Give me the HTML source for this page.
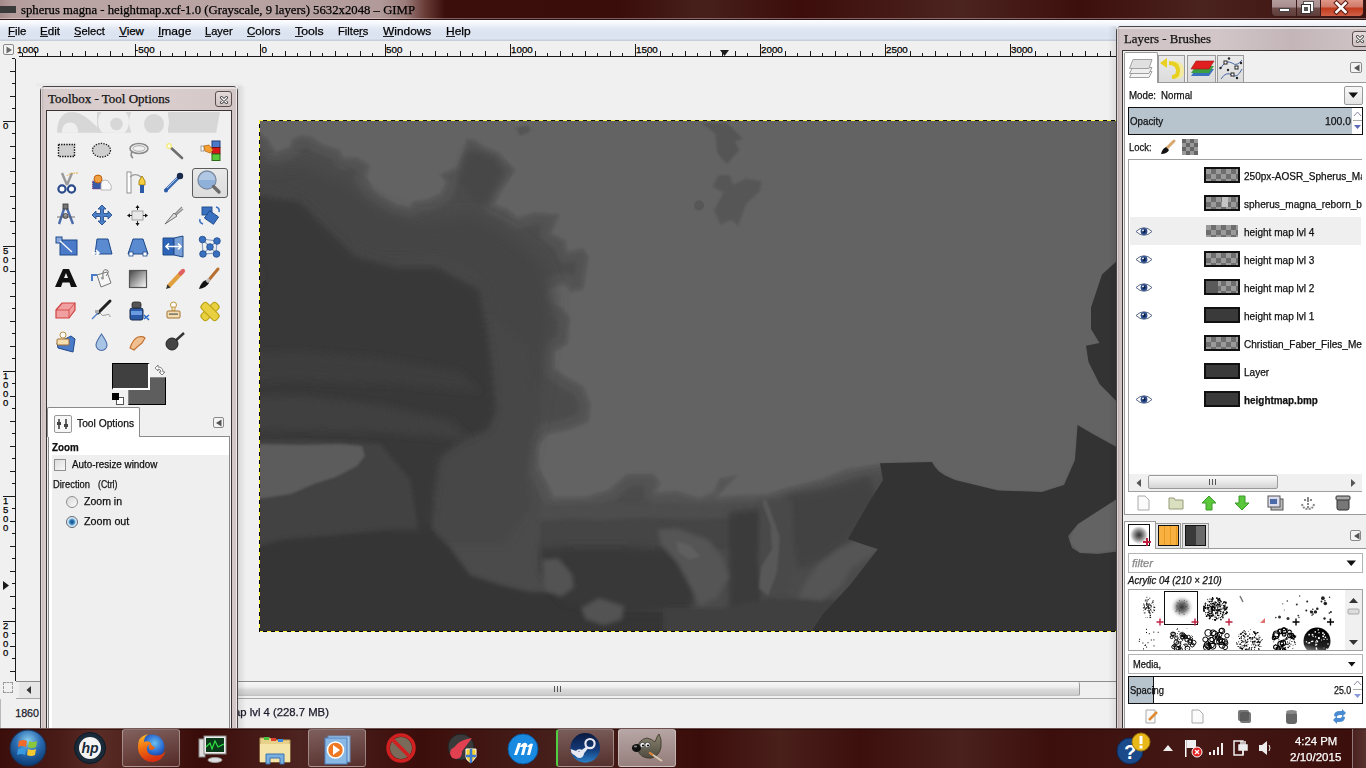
<!DOCTYPE html><html><head><meta charset="utf-8"><style>*{margin:0;padding:0;box-sizing:border-box}
html,body{width:1366px;height:768px;overflow:hidden;background:#f0f0f0;font-family:"Liberation Sans",sans-serif;position:relative}
.a{position:absolute}
.t{position:absolute;white-space:nowrap;line-height:1;-webkit-text-stroke:0.25px currentColor}
svg{position:absolute;overflow:visible}
</style></head><body><div class="a" style="left:0px;top:0px;width:1366px;height:19px;background:linear-gradient(90deg,#a48a8a 0px,#b49c9c 12px,#baa4a4 60px,#b8a2a2 250px,#b29a9a 380px,#9c7e7c 405px,#6a3c38 425px,#3c0e0b 445px,#3a0d0a 620px,#47201c 700px,#3c0d0a 800px,#4c241f 960px,#3d0f0c 1080px,#4a221e 1200px,#3c100d 1366px)"></div>
<div class="a" style="left:0px;top:18px;width:1366px;height:1px;background:rgba(255,240,240,0.35)"></div>
<div class="a" style="left:0px;top:19px;width:1366px;height:1px;background:#2a1212"></div>
<div class="a" style="left:0px;top:6px;width:16px;height:7px;background:#3a3a3a"></div>
<div class="t" style="left:21px;top:3.00px;font-size:13px;font-family:'Liberation Serif',serif;color:#000;transform:scaleX(0.9797);transform-origin:0 0;">spherus magna - heightmap.xcf-1.0 (Grayscale, 9 layers) 5632x2048 – GIMP</div>
<div class="a" style="left:1271px;top:0px;width:93px;height:17px;border:1px solid #3a1a18;border-top:none;border-radius:0 0 5px 5px;background:transparent"></div>
<div class="a" style="left:1272px;top:0px;width:25px;height:16px;background:linear-gradient(#b49c9c 0,#a88e8e 7px,#6e4c4a 8px,#5e3c3a 16px);border-right:1px solid #3a1a18;border-radius:0 0 0 4px"></div>
<div class="a" style="left:1279px;top:8px;width:11px;height:4px;background:#fff;border:1px solid #444"></div>
<div class="a" style="left:1297px;top:0px;width:24px;height:16px;background:linear-gradient(#b49c9c 0,#a88e8e 7px,#6e4c4a 8px,#5e3c3a 16px);border-right:1px solid #3a1a18"></div>
<div class="a" style="left:1304px;top:2px;width:9px;height:9px;border:2px solid #fff;outline:1px solid #555"></div>
<div class="a" style="left:1302px;top:5px;width:8px;height:8px;border:2px solid #fff;background:#555;outline:1px solid #333"></div>
<div class="a" style="left:1321px;top:0px;width:42px;height:16px;background:linear-gradient(#e09888 0,#d07868 7px,#c23a1c 8px,#d06048 16px);border-radius:0 0 4px 0"></div>
<svg style="left:1334px;top:1px" width="14" height="13"><path d="M2.5 2 L11.5 11 M11.5 2 L2.5 11" stroke="#5a1a10" stroke-width="4.6" stroke-linecap="square"/><path d="M2.5 2 L11.5 11 M11.5 2 L2.5 11" stroke="#fff" stroke-width="2.6" stroke-linecap="square"/></svg>
<div class="a" style="left:0px;top:20px;width:1366px;height:21px;background:linear-gradient(#fcfdff 0,#f6f8fc 3px,#e3e9f4 8px,#dbe3f1 14px,#dde5f2 19px,#c6ced9 20px)"></div>
<div class="t" style="left:8px;top:26.00px;font-size:11.5px;font-family:'Liberation Sans',sans-serif;color:#000;transform:scaleX(0.9930);transform-origin:0 0;">File</div>
<div class="t" style="left:40px;top:26.00px;font-size:11.5px;font-family:'Liberation Sans',sans-serif;color:#000;transform:scaleX(1.0093);transform-origin:0 0;">Edit</div>
<div class="t" style="left:74.2px;top:26.00px;font-size:11.5px;font-family:'Liberation Sans',sans-serif;color:#000;transform:scaleX(0.9637);transform-origin:0 0;">Select</div>
<div class="t" style="left:119.2px;top:26.00px;font-size:11.5px;font-family:'Liberation Sans',sans-serif;color:#000;">View</div>
<div class="t" style="left:157.8px;top:26.00px;font-size:11.5px;font-family:'Liberation Sans',sans-serif;color:#000;transform:scaleX(1.0451);transform-origin:0 0;">Image</div>
<div class="t" style="left:205.3px;top:26.00px;font-size:11.5px;font-family:'Liberation Sans',sans-serif;color:#000;transform:scaleX(0.9595);transform-origin:0 0;">Layer</div>
<div class="t" style="left:247.4px;top:26.00px;font-size:11.5px;font-family:'Liberation Sans',sans-serif;color:#000;transform:scaleX(1.0081);transform-origin:0 0;">Colors</div>
<div class="t" style="left:295px;top:26.00px;font-size:11.5px;font-family:'Liberation Sans',sans-serif;color:#000;transform:scaleX(1.0691);transform-origin:0 0;">Tools</div>
<div class="t" style="left:338.3px;top:26.00px;font-size:11.5px;font-family:'Liberation Sans',sans-serif;color:#000;transform:scaleX(0.9711);transform-origin:0 0;">Filters</div>
<div class="t" style="left:383.4px;top:26.00px;font-size:11.5px;font-family:'Liberation Sans',sans-serif;color:#000;transform:scaleX(1.0354);transform-origin:0 0;">Windows</div>
<div class="t" style="left:446px;top:26.00px;font-size:11.5px;font-family:'Liberation Sans',sans-serif;color:#000;transform:scaleX(1.0444);transform-origin:0 0;">Help</div>
<div class="a" style="left:8px;top:36px;width:7px;height:1px;background:#222"></div>
<div class="a" style="left:40px;top:36px;width:8px;height:1px;background:#222"></div>
<div class="a" style="left:74px;top:36px;width:7px;height:1px;background:#222"></div>
<div class="a" style="left:119px;top:36px;width:8px;height:1px;background:#222"></div>
<div class="a" style="left:158px;top:36px;width:5px;height:1px;background:#222"></div>
<div class="a" style="left:205px;top:36px;width:6px;height:1px;background:#222"></div>
<div class="a" style="left:247px;top:36px;width:8px;height:1px;background:#222"></div>
<div class="a" style="left:295px;top:36px;width:8px;height:1px;background:#222"></div>
<div class="a" style="left:359px;top:36px;width:5px;height:1px;background:#222"></div>
<div class="a" style="left:383px;top:36px;width:11px;height:1px;background:#222"></div>
<div class="a" style="left:446px;top:36px;width:9px;height:1px;background:#222"></div>
<div class="a" style="left:0px;top:41px;width:1366px;height:16px;background:#f0f0f0"></div>
<div class="a" style="left:3px;top:44px;width:11px;height:11px;border:1px solid #8a8a8a;border-radius:2px;background:#f4f4f4"></div>
<svg style="left:5px;top:46px" width="8" height="8"><path d="M1.5 0.5 L7 4 L1.5 7.5Z" fill="#6a6a6a"/></svg>
<svg style="left:0;top:0" width="1366" height="690"><rect x="19" y="56" width="1097" height="1" fill="#1a1a1a"/><rect x="15" y="59" width="1" height="622" fill="#1a1a1a"/><rect x="22" y="53" width="1" height="3" fill="#1a1a1a"/><rect x="35" y="51" width="1" height="5" fill="#1a1a1a"/><rect x="47" y="53" width="1" height="3" fill="#1a1a1a"/><rect x="60" y="51" width="1" height="5" fill="#1a1a1a"/><rect x="72" y="53" width="1" height="3" fill="#1a1a1a"/><rect x="85" y="51" width="1" height="5" fill="#1a1a1a"/><rect x="97" y="53" width="1" height="3" fill="#1a1a1a"/><rect x="110" y="51" width="1" height="5" fill="#1a1a1a"/><rect x="122" y="53" width="1" height="3" fill="#1a1a1a"/><rect x="135" y="44" width="1" height="12" fill="#1a1a1a"/><rect x="147" y="53" width="1" height="3" fill="#1a1a1a"/><rect x="160" y="51" width="1" height="5" fill="#1a1a1a"/><rect x="172" y="53" width="1" height="3" fill="#1a1a1a"/><rect x="185" y="51" width="1" height="5" fill="#1a1a1a"/><rect x="197" y="53" width="1" height="3" fill="#1a1a1a"/><rect x="210" y="51" width="1" height="5" fill="#1a1a1a"/><rect x="222" y="53" width="1" height="3" fill="#1a1a1a"/><rect x="235" y="51" width="1" height="5" fill="#1a1a1a"/><rect x="247" y="53" width="1" height="3" fill="#1a1a1a"/><rect x="260" y="44" width="1" height="12" fill="#1a1a1a"/><rect x="272" y="53" width="1" height="3" fill="#1a1a1a"/><rect x="285" y="51" width="1" height="5" fill="#1a1a1a"/><rect x="297" y="53" width="1" height="3" fill="#1a1a1a"/><rect x="310" y="51" width="1" height="5" fill="#1a1a1a"/><rect x="322" y="53" width="1" height="3" fill="#1a1a1a"/><rect x="335" y="51" width="1" height="5" fill="#1a1a1a"/><rect x="347" y="53" width="1" height="3" fill="#1a1a1a"/><rect x="360" y="51" width="1" height="5" fill="#1a1a1a"/><rect x="372" y="53" width="1" height="3" fill="#1a1a1a"/><rect x="385" y="44" width="1" height="12" fill="#1a1a1a"/><rect x="397" y="53" width="1" height="3" fill="#1a1a1a"/><rect x="410" y="51" width="1" height="5" fill="#1a1a1a"/><rect x="422" y="53" width="1" height="3" fill="#1a1a1a"/><rect x="435" y="51" width="1" height="5" fill="#1a1a1a"/><rect x="447" y="53" width="1" height="3" fill="#1a1a1a"/><rect x="460" y="51" width="1" height="5" fill="#1a1a1a"/><rect x="472" y="53" width="1" height="3" fill="#1a1a1a"/><rect x="485" y="51" width="1" height="5" fill="#1a1a1a"/><rect x="497" y="53" width="1" height="3" fill="#1a1a1a"/><rect x="510" y="44" width="1" height="12" fill="#1a1a1a"/><rect x="522" y="53" width="1" height="3" fill="#1a1a1a"/><rect x="535" y="51" width="1" height="5" fill="#1a1a1a"/><rect x="547" y="53" width="1" height="3" fill="#1a1a1a"/><rect x="560" y="51" width="1" height="5" fill="#1a1a1a"/><rect x="572" y="53" width="1" height="3" fill="#1a1a1a"/><rect x="585" y="51" width="1" height="5" fill="#1a1a1a"/><rect x="597" y="53" width="1" height="3" fill="#1a1a1a"/><rect x="610" y="51" width="1" height="5" fill="#1a1a1a"/><rect x="622" y="53" width="1" height="3" fill="#1a1a1a"/><rect x="635" y="44" width="1" height="12" fill="#1a1a1a"/><rect x="647" y="53" width="1" height="3" fill="#1a1a1a"/><rect x="660" y="51" width="1" height="5" fill="#1a1a1a"/><rect x="672" y="53" width="1" height="3" fill="#1a1a1a"/><rect x="685" y="51" width="1" height="5" fill="#1a1a1a"/><rect x="697" y="53" width="1" height="3" fill="#1a1a1a"/><rect x="710" y="51" width="1" height="5" fill="#1a1a1a"/><rect x="722" y="53" width="1" height="3" fill="#1a1a1a"/><rect x="735" y="51" width="1" height="5" fill="#1a1a1a"/><rect x="747" y="53" width="1" height="3" fill="#1a1a1a"/><rect x="760" y="44" width="1" height="12" fill="#1a1a1a"/><rect x="772" y="53" width="1" height="3" fill="#1a1a1a"/><rect x="785" y="51" width="1" height="5" fill="#1a1a1a"/><rect x="797" y="53" width="1" height="3" fill="#1a1a1a"/><rect x="810" y="51" width="1" height="5" fill="#1a1a1a"/><rect x="822" y="53" width="1" height="3" fill="#1a1a1a"/><rect x="835" y="51" width="1" height="5" fill="#1a1a1a"/><rect x="847" y="53" width="1" height="3" fill="#1a1a1a"/><rect x="860" y="51" width="1" height="5" fill="#1a1a1a"/><rect x="872" y="53" width="1" height="3" fill="#1a1a1a"/><rect x="885" y="44" width="1" height="12" fill="#1a1a1a"/><rect x="897" y="53" width="1" height="3" fill="#1a1a1a"/><rect x="910" y="51" width="1" height="5" fill="#1a1a1a"/><rect x="922" y="53" width="1" height="3" fill="#1a1a1a"/><rect x="935" y="51" width="1" height="5" fill="#1a1a1a"/><rect x="947" y="53" width="1" height="3" fill="#1a1a1a"/><rect x="960" y="51" width="1" height="5" fill="#1a1a1a"/><rect x="972" y="53" width="1" height="3" fill="#1a1a1a"/><rect x="985" y="51" width="1" height="5" fill="#1a1a1a"/><rect x="997" y="53" width="1" height="3" fill="#1a1a1a"/><rect x="1010" y="44" width="1" height="12" fill="#1a1a1a"/><rect x="1022" y="53" width="1" height="3" fill="#1a1a1a"/><rect x="1035" y="51" width="1" height="5" fill="#1a1a1a"/><rect x="1047" y="53" width="1" height="3" fill="#1a1a1a"/><rect x="1060" y="51" width="1" height="5" fill="#1a1a1a"/><rect x="1072" y="53" width="1" height="3" fill="#1a1a1a"/><rect x="1085" y="51" width="1" height="5" fill="#1a1a1a"/><rect x="1097" y="53" width="1" height="3" fill="#1a1a1a"/><rect x="1110" y="51" width="1" height="5" fill="#1a1a1a"/><rect x="12" y="58" width="3" height="1" fill="#1a1a1a"/><rect x="10" y="71" width="5" height="1" fill="#1a1a1a"/><rect x="12" y="83" width="3" height="1" fill="#1a1a1a"/><rect x="10" y="96" width="5" height="1" fill="#1a1a1a"/><rect x="12" y="108" width="3" height="1" fill="#1a1a1a"/><rect x="3" y="121" width="12" height="1" fill="#1a1a1a"/><rect x="12" y="133" width="3" height="1" fill="#1a1a1a"/><rect x="10" y="146" width="5" height="1" fill="#1a1a1a"/><rect x="12" y="158" width="3" height="1" fill="#1a1a1a"/><rect x="10" y="171" width="5" height="1" fill="#1a1a1a"/><rect x="12" y="183" width="3" height="1" fill="#1a1a1a"/><rect x="10" y="196" width="5" height="1" fill="#1a1a1a"/><rect x="12" y="208" width="3" height="1" fill="#1a1a1a"/><rect x="10" y="221" width="5" height="1" fill="#1a1a1a"/><rect x="12" y="233" width="3" height="1" fill="#1a1a1a"/><rect x="3" y="246" width="12" height="1" fill="#1a1a1a"/><rect x="12" y="258" width="3" height="1" fill="#1a1a1a"/><rect x="10" y="271" width="5" height="1" fill="#1a1a1a"/><rect x="12" y="283" width="3" height="1" fill="#1a1a1a"/><rect x="10" y="296" width="5" height="1" fill="#1a1a1a"/><rect x="12" y="308" width="3" height="1" fill="#1a1a1a"/><rect x="10" y="321" width="5" height="1" fill="#1a1a1a"/><rect x="12" y="333" width="3" height="1" fill="#1a1a1a"/><rect x="10" y="346" width="5" height="1" fill="#1a1a1a"/><rect x="12" y="358" width="3" height="1" fill="#1a1a1a"/><rect x="3" y="371" width="12" height="1" fill="#1a1a1a"/><rect x="12" y="383" width="3" height="1" fill="#1a1a1a"/><rect x="10" y="396" width="5" height="1" fill="#1a1a1a"/><rect x="12" y="408" width="3" height="1" fill="#1a1a1a"/><rect x="10" y="421" width="5" height="1" fill="#1a1a1a"/><rect x="12" y="433" width="3" height="1" fill="#1a1a1a"/><rect x="10" y="446" width="5" height="1" fill="#1a1a1a"/><rect x="12" y="458" width="3" height="1" fill="#1a1a1a"/><rect x="10" y="471" width="5" height="1" fill="#1a1a1a"/><rect x="12" y="483" width="3" height="1" fill="#1a1a1a"/><rect x="3" y="496" width="12" height="1" fill="#1a1a1a"/><rect x="12" y="508" width="3" height="1" fill="#1a1a1a"/><rect x="10" y="521" width="5" height="1" fill="#1a1a1a"/><rect x="12" y="533" width="3" height="1" fill="#1a1a1a"/><rect x="10" y="546" width="5" height="1" fill="#1a1a1a"/><rect x="12" y="558" width="3" height="1" fill="#1a1a1a"/><rect x="10" y="571" width="5" height="1" fill="#1a1a1a"/><rect x="12" y="583" width="3" height="1" fill="#1a1a1a"/><rect x="10" y="596" width="5" height="1" fill="#1a1a1a"/><rect x="12" y="608" width="3" height="1" fill="#1a1a1a"/><rect x="3" y="621" width="12" height="1" fill="#1a1a1a"/><rect x="12" y="633" width="3" height="1" fill="#1a1a1a"/><rect x="10" y="646" width="5" height="1" fill="#1a1a1a"/><rect x="12" y="658" width="3" height="1" fill="#1a1a1a"/><rect x="10" y="671" width="5" height="1" fill="#1a1a1a"/><path d="M720 50 L729 50 L724.5 56Z" fill="#1a1a1a"/><path d="M3 581 L3 590 L9 585.5Z" fill="#1a1a1a"/></svg>
<div class="t" style="left:17px;top:45.00px;font-size:9.8px;font-family:'Liberation Sans',sans-serif;color:#000;">1000</div>
<div class="t" style="left:135px;top:45.00px;font-size:9.8px;font-family:'Liberation Sans',sans-serif;color:#000;">-500</div>
<div class="t" style="left:261.5px;top:45.00px;font-size:9.8px;font-family:'Liberation Sans',sans-serif;color:#000;">0</div>
<div class="t" style="left:386px;top:45.00px;font-size:9.8px;font-family:'Liberation Sans',sans-serif;color:#000;">500</div>
<div class="t" style="left:511px;top:45.00px;font-size:9.8px;font-family:'Liberation Sans',sans-serif;color:#000;">1000</div>
<div class="t" style="left:636px;top:45.00px;font-size:9.8px;font-family:'Liberation Sans',sans-serif;color:#000;">1500</div>
<div class="t" style="left:761px;top:45.00px;font-size:9.8px;font-family:'Liberation Sans',sans-serif;color:#000;">2000</div>
<div class="t" style="left:886px;top:45.00px;font-size:9.8px;font-family:'Liberation Sans',sans-serif;color:#000;">2500</div>
<div class="t" style="left:1011px;top:45.00px;font-size:9.8px;font-family:'Liberation Sans',sans-serif;color:#000;">3000</div>
<div class="t" style="left:3px;top:121.00px;font-size:9.5px;font-family:'Liberation Sans',sans-serif;color:#000;">0</div>
<div class="t" style="left:3px;top:246.00px;font-size:9.5px;font-family:'Liberation Sans',sans-serif;color:#000;">5</div>
<div class="t" style="left:3px;top:255.00px;font-size:9.5px;font-family:'Liberation Sans',sans-serif;color:#000;">0</div>
<div class="t" style="left:3px;top:264.00px;font-size:9.5px;font-family:'Liberation Sans',sans-serif;color:#000;">0</div>
<div class="t" style="left:3px;top:371.00px;font-size:9.5px;font-family:'Liberation Sans',sans-serif;color:#000;">1</div>
<div class="t" style="left:3px;top:380.00px;font-size:9.5px;font-family:'Liberation Sans',sans-serif;color:#000;">0</div>
<div class="t" style="left:3px;top:389.00px;font-size:9.5px;font-family:'Liberation Sans',sans-serif;color:#000;">0</div>
<div class="t" style="left:3px;top:398.00px;font-size:9.5px;font-family:'Liberation Sans',sans-serif;color:#000;">0</div>
<div class="t" style="left:3px;top:496.00px;font-size:9.5px;font-family:'Liberation Sans',sans-serif;color:#000;">1</div>
<div class="t" style="left:3px;top:505.00px;font-size:9.5px;font-family:'Liberation Sans',sans-serif;color:#000;">5</div>
<div class="t" style="left:3px;top:514.00px;font-size:9.5px;font-family:'Liberation Sans',sans-serif;color:#000;">0</div>
<div class="t" style="left:3px;top:523.00px;font-size:9.5px;font-family:'Liberation Sans',sans-serif;color:#000;">0</div>
<div class="t" style="left:3px;top:621.00px;font-size:9.5px;font-family:'Liberation Sans',sans-serif;color:#000;">2</div>
<div class="t" style="left:3px;top:630.00px;font-size:9.5px;font-family:'Liberation Sans',sans-serif;color:#000;">0</div>
<div class="t" style="left:3px;top:639.00px;font-size:9.5px;font-family:'Liberation Sans',sans-serif;color:#000;">0</div>
<div class="t" style="left:3px;top:648.00px;font-size:9.5px;font-family:'Liberation Sans',sans-serif;color:#000;">0</div>
<svg style="left:0;top:0" width="1366" height="768"><defs><clipPath id="ic"><rect x="260" y="121" width="856" height="510"/></clipPath><filter id="b1" x="-10%" y="-10%" width="120%" height="120%"><feGaussianBlur stdDeviation="0.9"/></filter><filter id="b2" x="-10%" y="-10%" width="120%" height="120%"><feGaussianBlur stdDeviation="2"/></filter><filter id="b3" x="-20%" y="-20%" width="140%" height="140%"><feGaussianBlur stdDeviation="3.5"/></filter><filter id="b8" x="-30%" y="-30%" width="160%" height="160%"><feGaussianBlur stdDeviation="8"/></filter></defs><g clip-path="url(#ic)"><rect x="258" y="118" width="860" height="516" fill="#636363"/><path d="M200.0 131.0 L200.0 700.0 L1140.0 700.0 L1140.0 548.0 L1097.0 553.0 L1080.0 553.0 L1069.0 542.0 L1075.0 523.0 L1140.0 482.0 L1140.0 460.0 L1091.0 433.0 L1077.6 425.0 L1075.0 460.0 L1064.0 485.0 L1042.0 492.0 L998.0 490.5 L955.0 480.0 L939.0 471.4 L932.0 462.0 L880.6 463.2 L845.4 469.0 L822.0 478.4 L786.9 487.8 L765.8 493.7 L740.0 494.8 L717.8 496.5 L738.4 474.8 L720.0 478.0 L713.3 492.0 L699.6 497.6 L676.8 490.8 L656.3 492.0 L660.8 482.8 L654.0 473.7 L626.6 473.7 L608.4 489.6 L585.6 496.5 L553.7 496.5 L550.0 487.5 L539.0 467.0 L539.0 446.0 L547.0 435.0 L570.5 430.0 L589.0 422.0 L591.0 404.0 L583.5 386.0 L565.0 375.5 L555.0 368.0 L555.0 352.0 L568.0 344.0 L570.5 318.0 L563.0 308.0 L544.5 300.0 L547.0 290.0 L565.0 285.0 L570.5 292.5 L583.5 290.0 L589.0 257.0 L583.5 248.0 L568.0 251.0 L565.0 240.0 L552.0 233.0 L560.0 214.0 L534.0 212.0 L518.0 217.0 L508.0 209.0 L495.0 204.0 L500.0 193.5 L516.0 170.0 L498.0 152.0 L485.0 147.0 L474.0 139.0 L466.0 139.0 L464.0 149.0 L456.0 167.5 L440.0 174.0 L445.5 183.0 L440.0 193.5 L427.0 199.0 L414.0 201.0 L409.0 206.5 L396.0 204.0 L383.0 196.0 L373.0 188.0 L367.0 178.0 L370.0 165.0 L357.0 157.0 L344.0 157.0 L339.0 149.0 L323.0 144.0 L310.0 136.0 L300.0 135.0 L292.0 139.0 L289.0 147.0 L276.0 152.0 L268.0 139.0 L258.0 131.0 L200.0 131.0Z" fill="#595959" filter="url(#b1)"/><path d="M204.0 135.0 L204.0 696.0 L1136.0 696.0 L1136.0 552.5 L1097.5 557.0 L1097.0 557.0 L1080.0 557.0 L1079.6 557.0 L1079.2 556.9 L1078.8 556.8 L1078.5 556.7 L1078.1 556.5 L1077.8 556.3 L1077.5 556.1 L1077.2 555.8 L1066.2 544.8 L1065.9 544.5 L1065.7 544.2 L1065.5 543.9 L1065.3 543.5 L1065.2 543.1 L1065.1 542.8 L1065.0 542.4 L1065.0 542.0 L1065.0 541.6 L1065.1 541.2 L1065.2 540.8 L1071.2 521.8 L1071.3 521.4 L1071.5 521.1 L1071.7 520.7 L1072.0 520.4 L1072.2 520.1 L1072.5 519.8 L1072.9 519.6 L1136.0 479.8 L1136.0 462.4 L1089.1 436.5 L1088.9 436.4 L1081.1 431.8 L1079.0 460.3 L1078.9 460.7 L1078.8 461.2 L1078.7 461.6 L1067.7 486.6 L1067.5 486.9 L1067.3 487.3 L1067.1 487.6 L1066.8 487.8 L1066.5 488.1 L1066.2 488.3 L1065.9 488.5 L1065.6 488.7 L1065.2 488.8 L1043.2 495.8 L1042.8 495.9 L1042.3 496.0 L1041.9 496.0 L997.9 494.5 L997.5 494.5 L997.1 494.4 L954.1 483.9 L953.7 483.8 L953.4 483.7 L953.1 483.5 L937.1 474.9 L936.7 474.7 L936.4 474.4 L936.1 474.1 L935.8 473.8 L930.0 466.0 L881.0 467.2 L846.5 472.9 L823.5 482.1 L823.0 482.3 L788.0 491.7 L766.9 497.6 L766.4 497.7 L766.0 497.7 L740.2 498.8 L718.1 500.5 L717.7 500.5 L717.3 500.5 L717.0 500.4 L716.6 500.3 L716.2 500.2 L715.9 500.0 L715.5 499.8 L715.2 499.6 L715.0 499.3 L714.7 499.0 L714.5 498.7 L714.3 498.4 L714.1 498.0 L714.0 497.7 L713.9 497.3 L713.8 496.9 L713.8 496.5 L713.8 496.2 L713.8 496.1 L701.1 501.3 L700.7 501.4 L700.4 501.5 L700.0 501.6 L699.6 501.6 L699.2 501.6 L698.8 501.5 L698.5 501.4 L676.3 494.8 L656.5 496.0 L656.1 496.0 L655.7 496.0 L655.4 495.9 L655.0 495.8 L654.6 495.6 L654.3 495.4 L653.9 495.2 L653.6 495.0 L653.3 494.7 L653.1 494.4 L652.9 494.0 L652.7 493.7 L652.5 493.3 L652.4 493.0 L652.3 492.6 L652.3 492.2 L652.3 491.8 L652.3 491.4 L652.4 491.0 L652.6 490.6 L652.7 490.2 L656.1 483.2 L652.0 477.7 L628.1 477.7 L611.0 492.6 L610.7 492.9 L610.3 493.1 L610.0 493.3 L609.6 493.4 L586.8 500.3 L586.4 500.4 L586.0 500.5 L585.6 500.5 L553.7 500.5 L553.3 500.5 L552.9 500.4 L552.5 500.3 L552.2 500.2 L551.8 500.0 L551.5 499.8 L551.2 499.6 L550.9 499.3 L550.6 499.0 L550.4 498.7 L550.2 498.4 L550.0 498.0 L546.4 489.2 L535.5 468.9 L535.3 468.5 L535.2 468.2 L535.1 467.8 L535.0 467.4 L535.0 467.0 L535.0 446.0 L535.0 445.6 L535.1 445.2 L535.2 444.8 L535.3 444.4 L535.5 444.0 L535.8 443.6 L543.8 432.6 L544.0 432.3 L544.3 432.0 L544.6 431.8 L545.0 431.5 L545.4 431.3 L545.8 431.2 L546.2 431.1 L569.3 426.2 L585.3 419.3 L586.9 404.6 L580.3 388.8 L563.0 379.0 L562.6 378.7 L552.6 371.2 L552.3 370.9 L552.0 370.6 L551.7 370.3 L551.5 370.0 L551.3 369.6 L551.2 369.2 L551.1 368.8 L551.0 368.4 L551.0 368.0 L551.0 352.0 L551.0 351.6 L551.1 351.2 L551.2 350.8 L551.3 350.4 L551.5 350.0 L551.7 349.7 L552.0 349.4 L552.3 349.1 L552.6 348.8 L552.9 348.6 L564.2 341.6 L566.4 319.2 L560.4 311.2 L542.9 303.7 L542.6 303.5 L542.2 303.3 L541.9 303.0 L541.6 302.8 L541.3 302.5 L541.1 302.1 L540.9 301.8 L540.8 301.4 L540.6 301.0 L540.5 300.6 L540.5 300.2 L540.5 299.8 L540.5 299.4 L540.6 299.0 L543.1 289.0 L543.2 288.7 L543.4 288.3 L543.6 288.0 L543.8 287.6 L544.0 287.3 L544.3 287.1 L544.6 286.8 L544.9 286.6 L545.2 286.4 L545.6 286.3 L545.9 286.1 L563.9 281.1 L564.3 281.1 L564.7 281.0 L565.1 281.0 L565.5 281.0 L565.9 281.1 L566.3 281.2 L566.7 281.4 L567.0 281.6 L567.4 281.8 L567.7 282.0 L568.0 282.3 L568.2 282.6 L572.2 288.1 L580.0 286.6 L584.8 257.8 L581.5 252.5 L568.8 254.9 L568.4 255.0 L568.0 255.0 L567.6 255.0 L567.2 254.9 L566.8 254.8 L566.4 254.7 L566.1 254.5 L565.7 254.3 L565.4 254.0 L565.1 253.8 L564.9 253.5 L564.6 253.1 L564.4 252.8 L564.3 252.4 L564.1 252.1 L561.6 242.7 L550.1 236.5 L549.8 236.3 L549.5 236.1 L549.2 235.8 L548.9 235.5 L548.7 235.2 L548.5 234.9 L548.3 234.5 L548.2 234.1 L548.1 233.8 L548.0 233.4 L548.0 233.0 L548.0 232.6 L548.1 232.2 L548.2 231.8 L548.3 231.4 L554.2 217.6 L534.5 216.0 L519.2 220.8 L518.8 220.9 L518.4 221.0 L518.0 221.0 L517.6 221.0 L517.3 220.9 L516.9 220.8 L516.5 220.7 L516.2 220.5 L515.8 220.4 L515.5 220.1 L506.0 212.5 L493.6 207.7 L493.2 207.6 L492.9 207.4 L492.6 207.2 L492.3 206.9 L492.0 206.6 L491.7 206.3 L491.5 206.0 L491.4 205.7 L491.2 205.3 L491.1 204.9 L491.0 204.5 L491.0 204.2 L491.0 203.8 L491.0 203.4 L491.1 203.0 L491.2 202.6 L491.4 202.3 L496.4 191.8 L496.5 191.5 L496.7 191.2 L510.8 170.5 L495.8 155.4 L483.6 150.7 L483.2 150.6 L482.9 150.4 L482.6 150.2 L472.7 143.0 L469.3 143.0 L467.9 149.8 L467.8 150.2 L467.7 150.6 L459.7 169.1 L459.5 169.4 L459.3 169.8 L459.1 170.1 L458.8 170.4 L458.5 170.6 L458.2 170.8 L457.9 171.0 L457.5 171.2 L445.9 175.9 L448.9 180.9 L449.1 181.2 L449.2 181.6 L449.4 181.9 L449.4 182.3 L449.5 182.7 L449.5 183.1 L449.5 183.4 L449.4 183.8 L449.3 184.2 L449.2 184.5 L449.0 184.9 L443.5 195.4 L443.3 195.7 L443.1 196.0 L442.9 196.3 L442.6 196.6 L442.2 196.8 L441.9 197.0 L441.6 197.2 L428.6 202.7 L428.2 202.8 L427.9 202.9 L427.6 203.0 L416.0 204.7 L412.0 209.2 L411.7 209.5 L411.4 209.7 L411.0 210.0 L410.6 210.1 L410.3 210.3 L409.9 210.4 L409.5 210.5 L409.1 210.5 L408.6 210.5 L408.2 210.4 L395.2 207.9 L394.9 207.8 L394.6 207.7 L394.2 207.6 L393.9 207.4 L380.9 199.4 L380.5 199.1 L370.5 191.1 L370.2 190.9 L370.0 190.6 L369.8 190.4 L369.6 190.1 L363.6 180.1 L363.4 179.7 L363.2 179.4 L363.1 179.0 L363.0 178.6 L363.0 178.2 L363.0 177.9 L363.0 177.5 L363.1 177.1 L365.5 166.9 L355.9 161.0 L344.0 161.0 L343.6 161.0 L343.2 160.9 L342.8 160.8 L342.4 160.7 L342.1 160.5 L341.7 160.3 L341.4 160.0 L341.1 159.8 L340.8 159.5 L340.6 159.1 L336.4 152.4 L321.8 147.8 L321.5 147.7 L321.2 147.6 L320.9 147.4 L308.7 139.9 L300.8 139.1 L295.2 141.9 L292.7 148.4 L292.6 148.7 L292.4 149.1 L292.2 149.4 L292.0 149.7 L291.7 149.9 L291.4 150.2 L291.1 150.4 L290.8 150.6 L290.4 150.7 L277.4 155.7 L277.1 155.9 L276.7 155.9 L276.3 156.0 L275.9 156.0 L275.5 156.0 L275.1 155.9 L274.7 155.8 L274.4 155.6 L274.0 155.5 L273.7 155.2 L273.4 155.0 L273.1 154.7 L272.8 154.4 L272.6 154.1 L265.0 141.7 L256.6 135.0 L204.0 135.0Z M718.9 489.5 L727.2 480.8 L722.7 481.6 L718.9 489.5Z" fill="#525252" filter="url(#b1)"/><path d="M212.0 143.0 L212.0 688.0 L1128.0 688.0 L1128.0 561.5 L1098.4 564.9 L1097.0 565.0 L1080.0 565.0 L1078.8 564.9 L1077.7 564.8 L1076.5 564.5 L1075.4 564.1 L1074.3 563.6 L1073.3 563.0 L1072.4 562.3 L1071.5 561.5 L1060.5 550.5 L1059.7 549.6 L1059.0 548.6 L1058.4 547.6 L1057.9 546.5 L1057.5 545.4 L1057.2 544.3 L1057.0 543.1 L1057.0 541.9 L1057.1 540.7 L1057.3 539.5 L1057.6 538.4 L1063.6 519.4 L1064.0 518.3 L1064.5 517.2 L1065.1 516.2 L1065.9 515.2 L1066.7 514.3 L1067.6 513.5 L1068.6 512.9 L1128.0 475.4 L1128.0 467.1 L1088.1 445.1 L1087.0 460.9 L1086.8 462.2 L1086.5 463.6 L1086.0 464.8 L1075.0 489.8 L1074.5 490.8 L1073.9 491.8 L1073.2 492.7 L1072.4 493.5 L1071.6 494.3 L1070.7 495.0 L1069.7 495.6 L1068.7 496.0 L1067.6 496.4 L1045.6 503.4 L1044.3 503.8 L1043.0 504.0 L1041.6 504.0 L997.6 502.5 L996.4 502.4 L995.2 502.2 L952.2 491.7 L951.2 491.4 L950.2 491.0 L949.3 490.6 L933.3 482.0 L932.2 481.3 L931.2 480.5 L930.2 479.6 L929.4 478.6 L926.1 474.1 L881.7 475.2 L848.7 480.6 L826.5 489.5 L825.1 490.0 L790.1 499.4 L769.0 505.3 L767.7 505.6 L766.3 505.7 L740.7 506.8 L718.7 508.5 L717.6 508.5 L716.4 508.4 L715.3 508.2 L714.2 507.9 L713.1 507.5 L712.0 507.0 L711.0 506.4 L710.6 506.1 L704.1 508.7 L703.0 509.1 L701.9 509.4 L700.8 509.5 L699.6 509.6 L698.4 509.5 L697.3 509.4 L696.2 509.1 L675.4 502.9 L657.0 504.0 L655.8 504.0 L654.6 503.9 L653.5 503.7 L652.3 503.3 L651.2 502.9 L650.2 502.3 L649.2 501.7 L648.2 500.9 L647.4 500.1 L646.7 499.1 L646.0 498.1 L645.4 497.1 L645.0 496.0 L644.6 494.9 L644.4 493.7 L644.3 492.5 L644.3 491.3 L644.4 490.1 L644.7 489.0 L645.1 487.8 L645.5 486.7 L646.0 485.7 L631.1 485.7 L616.3 498.6 L615.3 499.4 L614.2 500.1 L613.1 500.7 L611.9 501.1 L589.1 508.0 L587.9 508.3 L586.8 508.4 L585.6 508.5 L553.7 508.5 L552.5 508.4 L551.4 508.3 L550.2 508.0 L549.1 507.6 L548.0 507.1 L547.0 506.5 L546.1 505.8 L545.2 505.0 L544.4 504.1 L543.7 503.1 L543.1 502.1 L542.6 501.1 L539.1 492.6 L528.4 472.7 L527.9 471.6 L527.5 470.5 L527.2 469.3 L527.1 468.2 L527.0 467.0 L527.0 446.0 L527.1 444.7 L527.3 443.5 L527.6 442.3 L528.0 441.1 L528.6 440.0 L529.3 438.9 L537.3 427.9 L538.1 427.0 L539.0 426.1 L539.9 425.3 L541.0 424.6 L542.1 424.0 L543.3 423.6 L544.5 423.3 L566.8 418.5 L577.8 413.8 L578.7 405.8 L574.0 394.4 L559.1 385.9 L557.8 385.1 L547.8 377.6 L546.9 376.8 L546.0 375.9 L545.2 375.0 L544.6 373.9 L544.0 372.8 L543.6 371.7 L543.3 370.5 L543.1 369.2 L543.0 368.0 L543.0 352.0 L543.1 350.8 L543.2 349.6 L543.6 348.4 L544.0 347.2 L544.5 346.1 L545.2 345.1 L545.9 344.1 L546.8 343.3 L547.7 342.5 L548.7 341.8 L556.6 336.9 L558.1 321.5 L555.3 317.7 L539.7 311.0 L538.7 310.5 L537.6 309.8 L536.7 309.1 L535.8 308.3 L535.0 307.4 L534.3 306.4 L533.7 305.3 L533.3 304.2 L532.9 303.1 L532.6 301.9 L532.5 300.7 L532.5 299.5 L532.6 298.3 L532.9 297.1 L535.4 287.1 L535.7 286.0 L536.1 284.9 L536.7 283.9 L537.3 282.9 L538.0 282.0 L538.8 281.2 L539.7 280.5 L540.6 279.8 L541.6 279.3 L542.7 278.8 L543.8 278.4 L561.8 273.4 L563.0 273.2 L564.2 273.0 L565.4 273.0 L566.6 273.1 L567.8 273.3 L568.9 273.7 L570.0 274.1 L571.1 274.7 L572.1 275.3 L573.1 276.1 L573.6 276.6 L576.1 261.7 L570.3 262.8 L569.1 262.9 L567.9 263.0 L566.7 262.9 L565.5 262.7 L564.4 262.4 L563.2 262.0 L562.2 261.5 L561.2 260.9 L560.2 260.1 L559.3 259.3 L558.6 258.4 L557.9 257.4 L557.3 256.4 L556.8 255.3 L556.4 254.2 L554.8 248.1 L546.3 243.6 L545.3 243.0 L544.4 242.2 L543.5 241.5 L542.7 240.6 L542.0 239.6 L541.4 238.6 L540.9 237.5 L540.5 236.4 L540.2 235.3 L540.1 234.1 L540.0 232.9 L540.1 231.8 L540.2 230.6 L540.5 229.5 L540.9 228.3 L542.5 224.7 L535.4 224.1 L521.6 228.5 L520.4 228.7 L519.3 228.9 L518.1 229.0 L516.9 229.0 L515.8 228.8 L514.6 228.5 L513.5 228.1 L512.5 227.6 L511.5 227.1 L510.5 226.4 L502.0 219.5 L490.7 215.2 L489.6 214.7 L488.6 214.2 L487.7 213.5 L486.8 212.7 L486.0 211.9 L485.2 211.0 L484.6 210.0 L484.1 209.0 L483.7 207.9 L483.3 206.8 L483.1 205.6 L483.0 204.5 L483.0 203.3 L483.1 202.2 L483.4 201.0 L483.7 199.9 L484.2 198.8 L489.2 188.3 L489.6 187.5 L490.1 186.7 L500.5 171.5 L491.3 162.3 L480.7 158.2 L479.7 157.8 L478.8 157.3 L477.9 156.7 L474.7 154.4 L467.0 172.3 L466.5 173.3 L465.9 174.3 L465.2 175.2 L464.4 176.1 L463.5 176.9 L462.6 177.5 L461.6 178.1 L460.5 178.6 L457.1 180.0 L457.3 180.9 L457.5 182.0 L457.5 183.2 L457.4 184.3 L457.3 185.4 L457.0 186.5 L456.6 187.5 L456.1 188.6 L450.6 199.1 L450.0 200.1 L449.3 201.0 L448.6 201.9 L447.7 202.7 L446.7 203.4 L445.7 204.0 L444.7 204.6 L431.7 210.1 L430.7 210.4 L429.8 210.7 L428.8 210.9 L420.0 212.2 L417.9 214.6 L417.0 215.4 L416.1 216.2 L415.0 216.9 L413.9 217.4 L412.8 217.9 L411.6 218.2 L410.4 218.4 L409.2 218.5 L407.9 218.5 L406.7 218.3 L393.7 215.8 L392.7 215.5 L391.7 215.2 L390.7 214.7 L389.7 214.2 L376.7 206.2 L375.5 205.4 L365.5 197.4 L364.7 196.7 L364.0 195.9 L363.3 195.1 L362.7 194.2 L356.7 184.2 L356.2 183.2 L355.7 182.1 L355.4 181.0 L355.1 179.9 L355.0 178.7 L355.0 177.6 L355.1 176.4 L355.3 175.3 L356.4 170.7 L353.6 169.0 L344.0 169.0 L342.8 168.9 L341.6 168.8 L340.4 168.5 L339.3 168.0 L338.2 167.5 L337.2 166.9 L336.2 166.1 L335.3 165.3 L334.5 164.4 L333.8 163.4 L331.2 159.1 L319.4 155.5 L318.5 155.1 L317.6 154.7 L316.7 154.2 L306.1 147.7 L302.3 147.3 L301.6 147.6 L300.2 151.2 L299.8 152.2 L299.3 153.2 L298.6 154.2 L297.9 155.0 L297.1 155.8 L296.3 156.6 L295.3 157.2 L294.3 157.7 L293.3 158.2 L280.3 163.2 L279.2 163.6 L278.0 163.8 L276.8 164.0 L275.7 164.0 L274.5 163.9 L273.3 163.7 L272.2 163.4 L271.1 162.9 L270.0 162.4 L269.0 161.7 L268.1 161.0 L267.2 160.2 L266.5 159.3 L265.8 158.3 L258.9 147.1 L253.8 143.0 L212.0 143.0Z" fill="#4b4b4b" filter="url(#b2)"/><polygon points="200.0,170.0 258.0,168.0 300.0,165.0 340.0,180.0 380.0,210.0 420.0,222.0 470.0,215.0 510.0,235.0 540.0,260.0 555.0,300.0 545.0,350.0 535.0,420.0 525.0,470.0 500.0,480.0 480.0,445.0 492.0,360.0 487.0,318.0 479.0,287.0 466.0,274.0 440.0,261.0 414.0,264.0 375.0,264.0 344.0,248.0 323.0,227.0 302.0,204.0 284.0,196.0 200.0,194.0" fill="#454545" filter="url(#b8)"/><polygon points="466.0,150.0 480.0,152.0 495.0,158.0 505.0,172.0 492.0,195.0 488.0,205.0 470.0,200.0 458.0,180.0" fill="#474747" filter="url(#b3)"/><polygon points="440.0,320.0 495.0,320.0 530.0,350.0 532.0,420.0 524.0,470.0 532.0,505.0 505.0,545.0 440.0,545.0 432.0,480.0" fill="#474747" filter="url(#b3)"/><polygon points="200.0,195.0 258.0,195.0 299.0,201.0 327.0,228.0 355.0,256.0 396.0,267.0 437.0,267.0 479.0,289.0 487.0,330.0 492.0,370.0 496.0,410.0 488.0,430.0 462.0,440.0 440.0,458.0 434.0,500.0 432.0,560.0 400.0,560.0 396.0,520.0 380.0,470.0 362.0,448.0 330.0,446.0 300.0,447.0 258.0,448.0 200.0,448.0" fill="#383838" filter="url(#b3)"/><polygon points="200.0,355.0 300.0,352.0 380.0,358.0 460.0,372.0 480.0,392.0 400.0,384.0 300.0,380.0 200.0,382.0" fill="#3e3e3e" filter="url(#b3)"/><polygon points="200.0,398.0 300.0,396.0 380.0,405.0 450.0,420.0 470.0,440.0 380.0,432.0 300.0,430.0 200.0,432.0" fill="#414141" filter="url(#b3)"/><polygon points="200.0,230.0 240.0,240.0 262.0,275.0 250.0,300.0 200.0,300.0" fill="#3c3c3c" filter="url(#b3)"/><polygon points="200.0,440.0 300.0,440.0 380.0,444.0 410.0,480.0 420.0,540.0 300.0,545.0 200.0,548.0" fill="#434343" filter="url(#b2)"/><polygon points="200.0,444.0 258.0,444.0 300.0,445.0 340.0,444.0 362.0,446.0 365.0,456.0 357.0,466.0 336.0,477.0 314.0,484.0 291.0,494.0 258.0,499.0 200.0,499.0" fill="#5c5c5c" filter="url(#b1)"/><polygon points="200.0,546.0 258.0,546.0 280.0,540.0 310.0,537.0 336.0,535.0 388.0,530.0 432.0,530.0 450.0,548.0 470.0,575.0 500.0,585.0 530.0,592.0 574.0,592.0 600.0,600.0 650.0,610.0 690.0,612.0 700.0,650.0 200.0,650.0" fill="#353535" filter="url(#b2)"/><polygon points="540.0,505.0 600.0,503.0 660.0,505.0 720.0,503.0 760.0,503.0 800.0,495.0 860.0,478.0 890.0,470.0 892.0,480.0 880.0,497.0 862.0,509.0 800.0,512.0 750.0,519.0 700.0,519.0 640.0,519.0 580.0,519.0 540.0,520.0" fill="#4d4d4d" filter="url(#b2)"/><polygon points="540.0,522.0 570.0,519.0 600.0,521.0 640.0,518.0 690.0,520.0 740.0,518.0 745.0,548.0 700.0,550.0 620.0,549.0 540.0,550.0" fill="#444444" filter="url(#b2)"/><polygon points="785.0,495.0 830.0,488.0 870.0,476.0 878.0,500.0 866.0,520.0 850.0,540.0 825.0,560.0 798.0,570.0 786.0,540.0" fill="#424242" filter="url(#b3)"/><polygon points="540.0,548.0 574.0,547.0 620.0,547.0 690.0,549.0 700.0,580.0 690.0,612.0 600.0,612.0 560.0,600.0 540.0,570.0" fill="#373737" filter="url(#b3)"/><polygon points="729.0,512.0 762.0,509.0 768.0,560.0 766.0,628.0 729.0,628.0" fill="#3b3b3b" filter="url(#b3)"/><polygon points="760.0,500.0 792.0,500.0 794.0,560.0 787.0,610.0 762.0,612.0 758.0,560.0" fill="#4a4a4a" filter="url(#b2)"/><polygon points="663.0,608.0 722.0,608.0 768.0,598.0 841.0,600.0 845.0,640.0 663.0,640.0" fill="#3f3f3f" filter="url(#b2)"/><polygon points="657.6,529.5 676.8,528.4 708.7,539.8 722.4,558.0 729.2,576.3 717.8,596.8 699.6,606.0 690.5,587.7 676.8,562.6 660.8,544.4" fill="#545454" filter="url(#b2)"/><polygon points="676.0,541.0 690.0,545.0 700.0,556.0 690.0,560.0 678.0,552.0" fill="#5e5e5e" filter="url(#b1)"/><polygon points="542.0,560.0 558.0,558.0 572.0,574.0 574.0,587.7 560.5,596.8 544.6,590.0" fill="#525252" filter="url(#b2)"/><polygon points="581.0,608.0 599.0,598.0 624.0,606.0 622.0,619.6 604.0,625.3 585.6,619.6" fill="#525252" filter="url(#b2)"/><polygon points="880.6,547.5 861.8,538.2 838.4,548.7 817.3,565.0 803.3,586.2 798.6,598.0 822.0,600.3 840.7,586.2 852.5,567.5 871.2,555.7" fill="#555555" filter="url(#b2)"/><polygon points="765.8,498.0 779.8,537.0 777.0,572.0 768.0,596.0 759.0,588.0 761.0,567.5 772.0,548.7 770.5,525.3 762.0,502.0" fill="#585858" filter="url(#b1)"/><polygon points="880.0,463.2 932.0,462.0 935.0,467.0 939.0,471.4 945.0,475.5 955.0,480.0 998.0,490.5 1042.0,492.0 1064.0,485.0 1075.0,460.0 1077.6,425.0 1091.0,433.0 1140.0,460.0 1140.0,484.0 1078.0,524.0 1068.0,536.0 1072.0,548.0 1080.0,553.0 1098.0,554.0 1140.0,549.0 1140.0,650.0 810.0,650.0 813.0,629.0 823.0,614.0 850.0,585.0 878.0,549.0 865.0,545.0 848.0,539.0 868.0,504.0 883.0,480.0" fill="#333333"/><polygon points="1140.0,240.0 1102.0,274.6 1091.0,307.4 1091.0,329.0 1099.5,343.0 1086.0,345.7 1088.5,362.0 1099.5,384.0 1140.0,425.0" fill="#333333"/><polygon points="701.3,122.8 726.8,122.8 742.7,138.7 734.7,141.8 739.5,149.8 726.8,164.0 717.2,153.0 715.6,134.0" fill="#555555" filter="url(#b1)"/><polygon points="718.8,175.0 730.0,175.0 733.0,184.8 745.9,178.4 761.7,181.6 760.0,191.0 745.9,203.9 742.7,213.4 737.9,226.0 731.5,219.7 720.4,224.5 714.0,210.2 723.6,192.7 712.5,186.4" fill="#575757" filter="url(#b1)"/><polygon points="516.0,128.0 528.0,125.0 531.0,131.0 520.0,136.0" fill="#555555" filter="url(#b1)"/><circle cx="699" cy="205.5" r="5" fill="#575757"/></g><line x1="259" y1="120.5" x2="1116" y2="120.5" stroke="#ffff40" stroke-width="1"/><line x1="259" y1="120.5" x2="1116" y2="120.5" stroke="#000" stroke-width="1" stroke-dasharray="4 4" stroke-dashoffset="-4"/><line x1="259" y1="631.5" x2="1116" y2="631.5" stroke="#ffff40" stroke-width="1"/><line x1="259" y1="631.5" x2="1116" y2="631.5" stroke="#000" stroke-width="1" stroke-dasharray="4 4" stroke-dashoffset="-4"/><line x1="259.5" y1="120" x2="259.5" y2="632" stroke="#ffff40" stroke-width="1"/><line x1="259.5" y1="120" x2="259.5" y2="632" stroke="#000" stroke-width="1" stroke-dasharray="4 4" stroke-dashoffset="-4"/></svg>
<div class="a" style="left:16px;top:681px;width:1100px;height:1px;background:#8c8c8c"></div>
<div class="a" style="left:16px;top:682px;width:1100px;height:16px;background:#f0f0f0"></div>
<div class="a" style="left:3px;top:682px;width:10px;height:11px;border:1px dashed #9a9a9a"></div>
<div class="a" style="left:19px;top:682px;width:21px;height:16px;background:#e6e6e6"></div>
<svg style="left:25px;top:685px" width="8" height="10"><path d="M6 1 L1.5 5 L6 9Z" fill="#333"/></svg>
<div class="a" style="left:238px;top:682px;width:842px;height:14px;background:linear-gradient(#f8f8f8 0,#eeeeee 5px,#d8d8d8 8px,#cfcfcf 12px,#bdbdbd 14px);border-right:1px solid #9a9a9a;border-radius:0 2px 2px 0"></div>
<svg style="left:554px;top:685px" width="8" height="8"><rect x="0" y="1" width="1" height="6" fill="#555"/><rect x="3" y="1" width="1" height="6" fill="#555"/><rect x="6" y="1" width="1" height="6" fill="#555"/></svg>
<div class="a" style="left:16px;top:698px;width:1100px;height:1px;background:#a8a8a8"></div>
<div class="a" style="left:0px;top:699px;width:1116px;height:29px;background:#f0f0f0"></div>
<div class="a" style="left:0px;top:699px;width:1px;height:29px;background:#b8b8b8"></div>
<div class="t" style="left:15.2px;top:708.00px;font-size:10.7px;font-family:'Liberation Sans',sans-serif;color:#1a1a2a;">1860</div>
<div class="t" style="left:234px;top:707.00px;font-size:10.7px;font-family:'Liberation Sans',sans-serif;color:#1a1a2a;transform:scaleX(1.0580);transform-origin:0 0;">ap lvl 4 (228.7 MB)</div>
<div class="a" style="left:238px;top:86px;width:8px;height:642px;background:linear-gradient(90deg,rgba(0,0,0,0.10),rgba(0,0,0,0))"></div>
<div class="a" style="left:36px;top:82px;width:206px;height:4px;background:linear-gradient(rgba(0,0,0,0),rgba(0,0,0,0.04))"></div>
<div class="a" style="left:1108px;top:26px;width:8px;height:702px;background:linear-gradient(90deg,rgba(0,0,0,0),rgba(0,0,0,0.08))"></div>
<div class="a" style="left:40px;top:86px;width:198px;height:642px;background:linear-gradient(90deg,#b6aaac 0,#d6cacb 3px,#dccfd0 50%,#d2c6c7 100%);border:1px solid #4a4444;border-bottom:none;border-radius:5px 5px 0 0"></div>
<div class="a" style="left:41px;top:87px;width:196px;height:2px;background:rgba(255,255,255,0.45)"></div>
<div class="a" style="left:41px;top:87px;width:1px;height:641px;background:rgba(255,255,255,0.5)"></div>
<div class="a" style="left:236px;top:87px;width:1px;height:641px;background:rgba(255,255,255,0.6)"></div>
<div class="t" style="left:48px;top:92.00px;font-size:13px;font-family:'Liberation Serif',serif;color:#101010;">Toolbox - Tool Options</div>
<div class="a" style="left:215px;top:91px;width:17px;height:16px;border:1px solid #5a4e4e;border-radius:3px;background:linear-gradient(#e4dada,#cfc3c4)"></div>
<svg style="left:219px;top:95px" width="10" height="10"><path d="M2.5 2.5 L7.5 7.5 M7.5 2.5 L2.5 7.5" stroke="#333" stroke-width="3" stroke-linecap="round"/><path d="M2.5 2.5 L7.5 7.5 M7.5 2.5 L2.5 7.5" stroke="#fff" stroke-width="1.4" stroke-linecap="round"/></svg>
<div class="a" style="left:46px;top:110px;width:186px;height:618px;background:#f0f0f0;border:1px solid #3c3434;border-bottom:none"></div>
<svg style="left:50px;top:108px" width="180" height="30"><defs><clipPath id="wc"><rect x="0" y="4" width="180" height="20.8"/></clipPath></defs><g clip-path="url(#wc)" fill="#d7d7d7"><path d="M7 26 Q7 4 22 4 Q35 4 53 26Z"/><circle cx="20" cy="22.5" r="8" fill="#efefef"/><rect x="47" y="4" width="34" height="22"/><circle cx="63.5" cy="14" r="15.5" fill="#efefef"/><circle cx="66.5" cy="16" r="6.3"/><path d="M118 4 L170 4 L166 26 L118 26Z"/><circle cx="99" cy="14" r="20" fill="#efefef"/><circle cx="104" cy="16" r="10"/></g></svg>
<div class="a" style="left:192px;top:168px;width:36px;height:30px;border:1px solid #5c5c5c;border-radius:3px;background:linear-gradient(#e9e9e9,#dcdcdc)"></div>
<svg style="left:57px;top:143px" width="20" height="16"><rect x="1.5" y="1.5" width="16" height="12" fill="#cfcfcf" stroke="#111" stroke-width="1.4" stroke-dasharray="1.4 1.2"/></svg><svg style="left:91px;top:142px" width="22" height="17"><ellipse cx="10.5" cy="8.2" rx="9" ry="6.8" fill="#cfcfcf" stroke="#222" stroke-width="1.3" stroke-dasharray="1.4 1.2"/></svg><svg style="left:128px;top:142px" width="22" height="18"><ellipse cx="11" cy="6.5" rx="9" ry="5" fill="none" stroke="#8a8a8a" stroke-width="1.6"/><ellipse cx="11" cy="6.5" rx="6" ry="2.8" fill="none" stroke="#aaa" stroke-width="1"/><path d="M4 9 Q2 14 5 16" stroke="#8a8a8a" stroke-width="1.6" fill="none"/></svg><svg style="left:165px;top:143px" width="20" height="17"><line x1="4" y1="3" x2="17" y2="15" stroke="#6e6e6e" stroke-width="2.6" stroke-linecap="round"/><circle cx="4" cy="3" r="3" fill="#f4ec80"/><circle cx="4" cy="3" r="1.5" fill="#fff"/></svg><svg style="left:200px;top:140px" width="22" height="21"><rect x="12" y="1" width="8" height="6.5" fill="#4a7ac8" stroke="#1e3e7a" stroke-width="1"/><rect x="12" y="7.5" width="8" height="6.5" fill="#d81818" stroke="#7a1010" stroke-width="1"/><rect x="12" y="14" width="8" height="6.5" fill="#5ac83a" stroke="#2a6a1a" stroke-width="1"/><rect x="1" y="6" width="3" height="5" fill="#fff" stroke="#888" stroke-width="0.8"/><path d="M4 6 L9 5 L13 10 L10 13 L5 11Z" fill="#f5a030" stroke="#b86a10" stroke-width="0.8"/></svg><svg style="left:56px;top:171px" width="23" height="23"><path d="M6 2 L11 14 M16 2 L11 14" stroke="#999" stroke-width="2.4" fill="none"/><path d="M11 5 Q13 2 22 2" stroke="#e0a020" stroke-width="1" stroke-dasharray="1.5 1" fill="none"/><circle cx="6" cy="18" r="3.6" fill="#fff" stroke="#2a4a8a" stroke-width="2.2"/><circle cx="15.5" cy="18" r="3.6" fill="#fff" stroke="#2a4a8a" stroke-width="2.2"/></svg><svg style="left:91px;top:172px" width="23" height="22"><rect x="1.5" y="9" width="12" height="8" fill="#3a5aa8" stroke="#8a2a6a" stroke-width="0.8" stroke-dasharray="1 1"/><circle cx="7" cy="7" r="4" fill="#f0a040" stroke="#c06010" stroke-width="1"/><path d="M10 12 Q10 8 14 8 Q18 8 18 11 Q21 12 20 18 L10 18Z" fill="#fafafa" stroke="#aaa" stroke-width="0.8"/></svg><svg style="left:126px;top:171px" width="23" height="24"><rect x="1" y="1" width="4" height="21" fill="#fff" stroke="#888" stroke-width="0.9"/><path d="M4 6 Q10 1 16 7" stroke="#999" stroke-width="1.2" fill="none"/><path d="M13 10 L16 5 L19 10 L19 14 L13 14Z" fill="#f6d040" stroke="#a08010" stroke-width="0.9"/><rect x="14" y="14" width="4" height="8" fill="#2a5aa8"/></svg><svg style="left:163px;top:171px" width="22" height="22"><line x1="3" y1="19" x2="15" y2="7" stroke="#3a6ab0" stroke-width="3.2" stroke-linecap="round"/><line x1="4" y1="17" x2="14" y2="7" stroke="#a8c4e8" stroke-width="1"/><circle cx="17" cy="5" r="3.2" fill="#1a2a4a"/><circle cx="3" cy="19.5" r="2" fill="#2a5aa8"/></svg><svg style="left:193px;top:169px" width="34" height="28"><circle cx="14" cy="11" r="9" fill="#b0c8e4" stroke="#7a8aa0" stroke-width="1.4"/><path d="M5.5 11 A8.5 8.5 0 0 0 22.5 11Z" fill="#8fb0d8"/><line x1="20.5" y1="17.5" x2="26" y2="23" stroke="#6a6a6a" stroke-width="3.4" stroke-linecap="round"/></svg><svg style="left:56px;top:203px" width="20" height="23"><path d="M9 3 L3 21 M10 3 L17 21" stroke="#4a6aa8" stroke-width="2.4" fill="none"/><rect x="7" y="1" width="5" height="5" fill="#777" stroke="#333" stroke-width="0.8"/><circle cx="9.5" cy="13" r="2.5" fill="#999" stroke="#333" stroke-width="0.8"/><line x1="1" y1="14" x2="19" y2="14" stroke="#555" stroke-width="0.8"/></svg><svg style="left:91px;top:204px" width="22" height="22"><path d="M11 1 L15 5 L12.5 5 L12.5 9.5 L17 9.5 L17 7 L21 11 L17 15 L17 12.5 L12.5 12.5 L12.5 17 L15 17 L11 21 L7 17 L9.5 17 L9.5 12.5 L5 12.5 L5 15 L1 11 L5 7 L5 9.5 L9.5 9.5 L9.5 5 L7 5Z" fill="#4a80c8" stroke="#2a5090" stroke-width="0.9"/></svg><svg style="left:126px;top:204px" width="23" height="23"><rect x="6" y="7" width="11" height="9" fill="#e8e8e8" stroke="#999" stroke-width="0.9"/><path d="M11.5 1 L9.5 4 L13.5 4Z M11.5 22 L9.5 19 L13.5 19Z M1 11.5 L4 9.5 L4 13.5Z M22 11.5 L19 9.5 L19 13.5Z" fill="#111"/><path d="M11.5 3 V6 M11.5 17 V20 M3 11.5 H6 M17 11.5 H20" stroke="#111" stroke-width="0.9"/></svg><svg style="left:163px;top:205px" width="22" height="21"><path d="M2 19 L11 8 L14 11Z" fill="#ddd" stroke="#666" stroke-width="0.9"/><path d="M12 9 L19 2 M13 10 L20 4" stroke="#888" stroke-width="1.2"/></svg><svg style="left:198px;top:205px" width="24" height="21"><rect x="4" y="2" width="10" height="8" fill="#3a70c0" stroke="#1e4a8a" stroke-width="0.9"/><rect x="8" y="8" width="11" height="9" transform="rotate(35 13.5 12.5)" fill="#3a70c0" stroke="#1e4a8a" stroke-width="0.9"/><path d="M18 2 Q22 3 21 7" stroke="#3a70c0" stroke-width="1.5" fill="none"/><path d="M5 19 Q1 18 2 14" stroke="#3a70c0" stroke-width="1.5" fill="none"/></svg><svg style="left:55px;top:236px" width="23" height="21"><rect x="5" y="4" width="17" height="15" fill="#4a7ac8" stroke="#1e4a8a" stroke-width="1"/><rect x="1" y="1" width="6" height="6" fill="#8aaae0" stroke="#1e4a8a" stroke-width="1"/><line x1="5" y1="5" x2="17" y2="16" stroke="#fff" stroke-width="1.2"/></svg><svg style="left:91px;top:237px" width="22" height="21"><path d="M6 2 L17 2 L21 17 L4 17Z" fill="#5a8ad0" stroke="#1e4a8a" stroke-width="1"/><path d="M1 16 L8 16 M5 13 L8 16 L5 19" stroke="#fff" stroke-width="1.6" fill="none"/></svg><svg style="left:127px;top:237px" width="22" height="21"><path d="M6 2 L16 2 L21 17 L1 17Z" fill="#5a8ad0" stroke="#1e4a8a" stroke-width="1"/><rect x="2" y="15" width="4" height="4" fill="#fff" stroke="#1e4a8a" stroke-width="0.8"/><rect x="16" y="15" width="4" height="4" fill="#fff" stroke="#1e4a8a" stroke-width="0.8"/></svg><svg style="left:162px;top:235px" width="23" height="23"><path d="M1 3 L12 3 L12 20 L1 20Z" fill="#2e64b8" stroke="#1e4a8a" stroke-width="1"/><path d="M12 3 L21 1 L21 22 L12 20Z" fill="#7aa0d8" stroke="#1e4a8a" stroke-width="1"/><path d="M4 11.5 L19 11.5 M7 8.5 L4 11.5 L7 14.5 M16 8.5 L19 11.5 L16 14.5" stroke="#fff" stroke-width="1.6" fill="none"/></svg><svg style="left:198px;top:235px" width="24" height="24"><path d="M4 4 L19 6 L18 18 L5 19Z M4 4 L12 12 L18 18 M19 6 L12 12 L5 19" stroke="#8aa0c0" stroke-width="1.2" fill="none"/><g fill="#3a70c0" stroke="#1e4a8a" stroke-width="0.8"><circle cx="4.5" cy="4.5" r="3.3"/><circle cx="19" cy="6" r="3.3"/><circle cx="12" cy="12" r="3.3"/><circle cx="5" cy="19" r="3.3"/><circle cx="18.5" cy="19" r="3.3"/></g></svg><svg style="left:54px;top:267px" width="24" height="23"><path d="M1 20 L9 2 L15 2 L23 20 L17 20 L15.5 15.5 L8.5 15.5 L7 20Z M10 11 L14 11 L12 6Z" fill="#111" fill-rule="evenodd"/></svg><svg style="left:90px;top:267px" width="24" height="23"><path d="M7 8 L17 5 L21 16 L11 20Z" fill="#f6f6f6" stroke="#777" stroke-width="1"/><circle cx="12.5" cy="11" r="1.5" fill="#999"/><path d="M13 10 Q12 1 17 3 Q20 4 16 9" stroke="#777" stroke-width="1" fill="none"/><path d="M7 8 L2 8 L2 14" stroke="#4a7ac8" stroke-width="2" fill="none"/></svg><svg style="left:128px;top:269px" width="21" height="21"><defs><linearGradient id="gg" x1="0" y1="0" x2="1" y2="1"><stop offset="0" stop-color="#444"/><stop offset="1" stop-color="#fff"/></linearGradient></defs><rect x="1.5" y="1.5" width="17" height="17" fill="url(#gg)" stroke="#555" stroke-width="1.2"/></svg><svg style="left:165px;top:268px" width="21" height="22"><line x1="3" y1="19" x2="17" y2="4" stroke="#e0a040" stroke-width="4.2"/><line x1="15.5" y1="5.5" x2="18" y2="3" stroke="#e06060" stroke-width="4.2" stroke-linecap="round"/><path d="M1 21 L2.5 16.5 L5.5 19.5Z" fill="#333"/></svg><svg style="left:198px;top:267px" width="22" height="24"><line x1="10" y1="14" x2="20" y2="2" stroke="#b87030" stroke-width="3" stroke-linecap="round"/><path d="M1 22 Q3 15 8 13 L11 16 Q8 21 1 22Z" fill="#111"/><rect x="8" y="12" width="4" height="3" transform="rotate(-50 10 13.5)" fill="#bbb"/></svg><svg style="left:54px;top:301px" width="23" height="20"><path d="M2 9 L8 2 L21 2 L21 9 L15 17 L2 17Z" fill="#f0a0a0" stroke="#d04040" stroke-width="1.2"/><path d="M2 9 L15 9 L21 2 M15 9 L15 17" stroke="#d04040" stroke-width="0.8" fill="none"/></svg><svg style="left:90px;top:299px" width="23" height="23"><line x1="8" y1="14" x2="20" y2="2" stroke="#222" stroke-width="3" stroke-linecap="round"/><line x1="2" y1="20" x2="8" y2="14" stroke="#4a7ac8" stroke-width="1.2"/><path d="M10 14 Q12 18 16 16 Q20 14 20 18" stroke="#999" stroke-width="1" fill="none"/><rect x="5" y="11" width="4" height="3" fill="#aaa"/></svg><svg style="left:128px;top:301px" width="23" height="22"><rect x="2" y="7" width="13" height="12" rx="2" fill="#2a5aa8" stroke="#1a2a4a" stroke-width="1"/><rect x="4" y="1" width="9" height="6" rx="2" fill="#555" stroke="#222" stroke-width="0.8"/><rect x="3" y="10" width="11" height="4" fill="#6a9ae0"/><path d="M16 18 L21 14 M16 14 L21 19" stroke="#2a6ac8" stroke-width="1.5"/></svg><svg style="left:165px;top:301px" width="18" height="19"><circle cx="8.5" cy="4" r="3" fill="#fff" stroke="#c09040" stroke-width="1"/><rect x="7" y="6" width="3" height="4" fill="#f0e0b0" stroke="#c09040" stroke-width="0.8"/><rect x="2" y="10" width="13" height="7" rx="1" fill="#f4deb0" stroke="#a07030" stroke-width="1"/><rect x="4" y="12.5" width="9" height="1.2" fill="#555"/></svg><svg style="left:199px;top:301px" width="22" height="21"><g transform="rotate(45 11 10.5)"><rect x="7" y="0" width="8" height="21" rx="3" fill="#e8d040" stroke="#b8a010" stroke-width="1"/></g><g transform="rotate(-45 11 10.5)"><rect x="7" y="0" width="8" height="21" rx="3" fill="#e8d040" stroke="#b8a010" stroke-width="1"/></g></svg><svg style="left:55px;top:331px" width="22" height="23"><path d="M2 12 L16 5 L20 8 L18 21 L3 17Z" fill="#4a7ac8" stroke="#1e4a8a" stroke-width="1"/><circle cx="8" cy="4" r="3" fill="#fff" stroke="#c09040" stroke-width="1"/><rect x="2" y="8" width="12" height="6" rx="1" fill="#f4deb0" stroke="#a07030" stroke-width="1"/></svg><svg style="left:94px;top:333px" width="16" height="19"><path d="M7.5 1 Q2 9 2 12 A5.5 5.5 0 0 0 13 12 Q13 9 7.5 1Z" fill="#a8c4e4" stroke="#4a6aa8" stroke-width="1.1"/></svg><svg style="left:128px;top:333px" width="20" height="19"><path d="M2 15 Q5 6 10 4 Q15 3 17 5 L14 10 Q10 13 6 17Z" fill="#f0c090" stroke="#c07030" stroke-width="1.1"/></svg><svg style="left:165px;top:331px" width="21" height="21"><line x1="8" y1="12" x2="19" y2="2" stroke="#333" stroke-width="2.4"/><circle cx="7" cy="13" r="6" fill="#444" stroke="#222" stroke-width="1"/></svg>
<div class="a" style="left:128px;top:377px;width:38px;height:28px;background:#5e5e5e;border-right:1px solid #000;border-bottom:1px solid #000;border-left:1px solid #888;border-top:1px solid #888"></div>
<div class="a" style="left:112px;top:363px;width:38px;height:27px;background:#404040;border:1px solid #000;border-right:2px solid #fff;border-bottom:2px solid #fff;outline:0"></div>
<div class="a" style="left:116px;top:397px;width:8px;height:8px;background:#fff;border:1px solid #555"></div>
<div class="a" style="left:112px;top:393px;width:7px;height:7px;background:#000"></div>
<svg style="left:153px;top:363px" width="14" height="13"><path d="M2 5 L5 2 L5 4 Q10 4 10 9 L12 9 L9 12 L6 9 L8 9 Q8 6 5 6 L5 8Z" fill="#fff" stroke="#777" stroke-width="0.9"/></svg>
<div class="a" style="left:47px;top:407px;width:93px;height:30px;background:#fff;border:1px solid #8a8a8a;border-bottom:none;border-radius:2px 2px 0 0"></div>
<div class="a" style="left:140px;top:436px;width:90px;height:1px;background:#8a8a8a"></div>
<div class="a" style="left:48px;top:437px;width:182px;height:291px;background:#fff;border-left:1px solid #8a8a8a;border-right:1px solid #8a8a8a"></div>
<div class="a" style="left:54px;top:415px;width:18px;height:18px;border:1px solid #9a9a9a;border-radius:2px;background:#f6f6f6"></div>
<svg style="left:57px;top:418px" width="13" height="12"><rect x="1" y="1" width="2" height="10" fill="#666"/><rect x="0" y="4" width="4" height="3" fill="#444"/><rect x="8" y="1" width="2" height="10" fill="#666"/><rect x="7" y="6" width="4" height="3" fill="#444"/></svg>
<div class="t" style="left:77px;top:419.00px;font-size:10px;font-family:'Liberation Sans',sans-serif;color:#111;transform:scaleX(1.0255);transform-origin:0 0;">Tool Options</div>
<div class="a" style="left:213px;top:417px;width:11px;height:11px;border:1px solid #8a8a8a;border-radius:2px;background:#f4f4f4"></div>
<svg style="left:215px;top:419px" width="8" height="8"><path d="M6.5 0.5 L1 4 L6.5 7.5Z" fill="#555"/></svg>
<div class="t" style="left:52px;top:443.00px;font-size:10px;font-family:'Liberation Sans',sans-serif;color:#111;font-weight:700;transform:scaleX(0.9774);transform-origin:0 0;">Zoom</div>
<div class="a" style="left:52px;top:455px;width:177px;height:273px;background:#efefef"></div>
<div class="a" style="left:54px;top:459px;width:12px;height:12px;border:1px solid #8e8f8f;background:linear-gradient(135deg,#dcdcdc,#f8f8f8)"></div>
<div class="t" style="left:72.4px;top:460.00px;font-size:10px;font-family:'Liberation Sans',sans-serif;color:#111;transform:scaleX(0.9850);transform-origin:0 0;">Auto-resize window</div>
<div class="t" style="left:52.6px;top:480.00px;font-size:10px;font-family:'Liberation Sans',sans-serif;color:#111;transform:scaleX(0.9377);transform-origin:0 0;">Direction</div>
<div class="t" style="left:97.8px;top:480.00px;font-size:10px;font-family:'Liberation Sans',sans-serif;color:#111;transform:scaleX(0.8734);transform-origin:0 0;">(Ctrl)</div>
<div class="a" style="left:66px;top:496px;width:12px;height:12px;border:1px solid #8e8f8f;border-radius:50%;background:linear-gradient(135deg,#d8d8d8,#fafafa)"></div>
<div class="t" style="left:83.9px;top:497.00px;font-size:10px;font-family:'Liberation Sans',sans-serif;color:#111;transform:scaleX(1.0520);transform-origin:0 0;">Zoom in</div>
<div class="a" style="left:66px;top:516px;width:12px;height:12px;border:1px solid #5a6a7a;border-radius:50%;background:radial-gradient(circle,#1a4a7a 0,#2a7ab8 2px,#6ab0e0 3px,#d8e4ee 4px,#f4f4f4 6px)"></div>
<div class="t" style="left:83.9px;top:517.00px;font-size:10px;font-family:'Liberation Sans',sans-serif;color:#111;transform:scaleX(1.0725);transform-origin:0 0;">Zoom out</div>
<div class="a" style="left:1116px;top:26px;width:252px;height:702px;background:linear-gradient(90deg,#b0a4a6 0,#cfc3c5 3px,#d2c6c8 40%,#c4b6b8 70%,#d0c4c6 100%);border:1px solid #4a4444;border-bottom:none;border-radius:5px 0 0 0"></div>
<div class="a" style="left:1117px;top:27px;width:250px;height:2px;background:rgba(255,255,255,0.45)"></div>
<div class="a" style="left:1117px;top:27px;width:1px;height:701px;background:rgba(255,255,255,0.5)"></div>
<div class="t" style="left:1124.2px;top:32.00px;font-size:13px;font-family:'Liberation Serif',serif;color:#101010;transform:scaleX(0.9876);transform-origin:0 0;">Layers - Brushes</div>
<div class="a" style="left:1352px;top:31px;width:16px;height:16px;border:1px solid #5a4e4e;border-radius:3px;background:linear-gradient(#e4dada,#cfc3c4)"></div>
<svg style="left:1355px;top:34px" width="10" height="10"><path d="M2.5 2.5 L7.5 7.5 M7.5 2.5 L2.5 7.5" stroke="#333" stroke-width="3" stroke-linecap="round"/><path d="M2.5 2.5 L7.5 7.5 M7.5 2.5 L2.5 7.5" stroke="#fff" stroke-width="1.4" stroke-linecap="round"/></svg>
<div class="a" style="left:1122px;top:50px;width:246px;height:678px;background:#f0f0f0;border:1px solid #3c3434;border-right:none;border-bottom:none"></div>
<div class="a" style="left:1124px;top:82px;width:244px;height:432px;background:#fff;border-top:1px solid #9a9a9a;border-left:1px solid #9a9a9a"></div>
<div class="a" style="left:1124px;top:52px;width:34px;height:31px;background:#fff;border:1px solid #9a9a9a;border-bottom:none;border-radius:2px 2px 0 0"></div>
<div class="a" style="left:1158px;top:55px;width:27px;height:27px;background:linear-gradient(#eaeaea,#dcdcdc);border:1px solid #9a9a9a;border-bottom:none"></div>
<div class="a" style="left:1187px;top:55px;width:29px;height:27px;background:linear-gradient(#eaeaea,#dcdcdc);border:1px solid #9a9a9a;border-bottom:none"></div>
<div class="a" style="left:1217px;top:55px;width:27px;height:27px;background:linear-gradient(#eaeaea,#dcdcdc);border:1px solid #9a9a9a;border-bottom:none"></div>
<svg style="left:1128px;top:58px" width="26" height="22"><g stroke="#a0a0a0" stroke-width="1"><path d="M1.5 19.5 L4.5 13.5 L24 13.5 L21 19.5Z" fill="#f4f4f4"/><path d="M1.5 15.5 L4.5 9.5 L24 9.5 L21 15.5Z" fill="#eeeeee"/><path d="M1.5 10.5 L5 1.5 L24 1.5 L21 10.5Z" fill="#e0e0e0"/></g></svg>
<svg style="left:1158px;top:57px" width="28" height="24"><path d="M15 6 Q24 6 24 14 Q24 20 18 20" stroke="#f2eaa0" stroke-width="4" fill="none"/><path d="M11 6 Q20 6 20 14 Q20 20 14 20" stroke="#e8d020" stroke-width="4" fill="none"/><path d="M2 6 L9 1 L9 11Z" fill="#e8d020"/></svg>
<svg style="left:1188px;top:57px" width="28" height="24"><path d="M3 19 L8 12 L26 12 L21 19Z" fill="#3a70c0"/><path d="M3 16 L8 9 L26 9 L21 16Z" fill="#3ca040"/><path d="M3 12 L8 4 L26 4 L21 12Z" fill="#e02020" stroke="#a01010" stroke-width="0.6"/></svg>
<svg style="left:1218px;top:57px" width="26" height="24"><path d="M2 12 Q8 2 14 6 Q19 10 24 3 M3 22 Q8 14 14 18 Q19 22 24 12" stroke="#4a6aa8" stroke-width="1" fill="none"/><g fill="#fff" stroke="#222" stroke-width="1"><rect x="6" y="4" width="3" height="3"/><rect x="17" y="9" width="3" height="3"/><rect x="13" y="16" width="3" height="3"/></g><g fill="#222"><circle cx="2.5" cy="11" r="1.2"/><circle cx="11" cy="1.5" r="1.2"/><circle cx="10" cy="13" r="1.2"/><circle cx="19" cy="21" r="1.2"/><circle cx="23" cy="6" r="1.2"/></g></svg>
<div class="a" style="left:1350px;top:62px;width:12px;height:11px;border:1px solid #8a8a8a;border-radius:2px;background:#f4f4f4"></div>
<svg style="left:1353px;top:64px" width="8" height="8"><path d="M6.5 0.5 L1 4 L6.5 7.5Z" fill="#555"/></svg>
<div class="t" style="left:1128.8px;top:91.00px;font-size:10px;font-family:'Liberation Sans',sans-serif;color:#111;transform:scaleX(0.9716);transform-origin:0 0;">Mode:</div>
<div class="t" style="left:1160.8px;top:91.00px;font-size:10px;font-family:'Liberation Sans',sans-serif;color:#111;transform:scaleX(0.9682);transform-origin:0 0;">Normal</div>
<div class="a" style="left:1344px;top:86px;width:19px;height:19px;border:1px solid #9a9a9a;border-radius:2px;background:linear-gradient(#f8f8f8,#e4e4e4)"></div>
<svg style="left:1348px;top:92px" width="11" height="7"><path d="M0.5 0.5 L10 0.5 L5.25 6Z" fill="#111"/></svg>
<div class="a" style="left:1128px;top:107px;width:235px;height:28px;border:1px solid #111;background:#fff"></div>
<div class="a" style="left:1129px;top:108px;width:223px;height:26px;background:#b7c3cd"></div>
<div class="t" style="left:1130px;top:117.00px;font-size:10px;font-family:'Liberation Sans',sans-serif;color:#111;transform:scaleX(0.9735);transform-origin:0 0;">Opacity</div>
<div class="t" style="left:1325px;top:117.00px;font-size:10px;font-family:'Liberation Sans',sans-serif;color:#111;transform:scaleX(1.0391);transform-origin:0 0;">100.0</div>
<svg style="left:1353px;top:110px" width="9" height="22"><path d="M1 6 L4.5 2 L8 6" stroke="#8a8aa8" fill="none"/><rect x="0" y="10" width="9" height="1" fill="#aaa"/><path d="M1 15 L4.5 19 L8 15Z" fill="#5a6ab8"/></svg>
<div class="t" style="left:1128.5px;top:143.00px;font-size:10px;font-family:'Liberation Sans',sans-serif;color:#111;transform:scaleX(0.9414);transform-origin:0 0;">Lock:</div>
<svg style="left:1160px;top:139px" width="16" height="16"><line x1="7" y1="9" x2="14" y2="2" stroke="#d8a870" stroke-width="3" stroke-linecap="round"/><path d="M1 15 Q2 10 6 8 L9 11 Q7 15 1 15Z" fill="#111"/></svg>
<svg style="left:1182px;top:139px" width="16" height="16"><rect width="16" height="16" fill="#999"/><g fill="#666"><rect x="0" y="0" width="4" height="4"/><rect x="8" y="0" width="4" height="4"/><rect x="4" y="4" width="4" height="4"/><rect x="12" y="4" width="4" height="4"/><rect x="0" y="8" width="4" height="4"/><rect x="8" y="8" width="4" height="4"/><rect x="4" y="12" width="4" height="4"/><rect x="12" y="12" width="4" height="4"/></g></svg>
<div class="a" style="left:1128px;top:159px;width:235px;height:333px;background:#fff;border:1px solid #a0a0a0"></div>
<div class="a" style="left:1130px;top:217px;width:231px;height:28px;background:#efefef"></div>
<div class="a" style="left:1204px;top:167px;width:36px;height:16px;background-color:#9a9a9a;background-image:linear-gradient(45deg,#6e6e6e 25%,transparent 25%,transparent 75%,#6e6e6e 75%),linear-gradient(45deg,#6e6e6e 25%,transparent 25%,transparent 75%,#6e6e6e 75%);background-size:10px 10px;background-position:0 0,5px 5px;border:2px solid #111;"></div>
<div class="a" style="left:1244px;top:165px;width:118px;height:20px;overflow:hidden"><div class="t" style="left:0px;top:7.00px;font-size:10px;font-family:'Liberation Sans',sans-serif;color:#111;transform:scaleX(1.0052);transform-origin:0 0;">250px-AOSR_Spherus_Magna</div></div>
<div class="a" style="left:1204px;top:195px;width:36px;height:16px;background-color:#9a9a9a;background-image:linear-gradient(45deg,#6e6e6e 25%,transparent 25%,transparent 75%,#6e6e6e 75%),linear-gradient(45deg,#6e6e6e 25%,transparent 25%,transparent 75%,#6e6e6e 75%);background-size:10px 10px;background-position:0 0,5px 5px;border:2px solid #111;"></div>
<div class="a" style="left:1244px;top:193px;width:118px;height:20px;overflow:hidden"><div class="t" style="left:0px;top:7.00px;font-size:10px;font-family:'Liberation Sans',sans-serif;color:#111;transform:scaleX(1.0052);transform-origin:0 0;">spherus_magna_reborn_by</div></div>
<div class="a" style="left:1206px;top:225px;width:32px;height:12px;background-color:#9a9a9a;background-image:linear-gradient(45deg,#6e6e6e 25%,transparent 25%,transparent 75%,#6e6e6e 75%),linear-gradient(45deg,#6e6e6e 25%,transparent 25%,transparent 75%,#6e6e6e 75%);background-size:10px 10px;background-position:0 0,5px 5px;"></div>
<svg style="left:1135px;top:226px" width="18" height="11"><path d="M1 5.5 Q9 -2 17 5.5 Q9 13 1 5.5Z" fill="#fff" stroke="#5a6a88" stroke-width="1"/><circle cx="9" cy="5.5" r="3.4" fill="#2a4a8a"/><circle cx="9" cy="5.5" r="1.4" fill="#0a1a3a"/><circle cx="8" cy="4.4" r="0.9" fill="#fff"/></svg>
<div class="a" style="left:1244px;top:221px;width:118px;height:20px;overflow:hidden"><div class="t" style="left:0px;top:7.00px;font-size:10px;font-family:'Liberation Sans',sans-serif;color:#111;transform:scaleX(1.0052);transform-origin:0 0;">height map lvl 4</div></div>
<div class="a" style="left:1204px;top:251px;width:36px;height:16px;background-color:#9a9a9a;background-image:linear-gradient(45deg,#6e6e6e 25%,transparent 25%,transparent 75%,#6e6e6e 75%),linear-gradient(45deg,#6e6e6e 25%,transparent 25%,transparent 75%,#6e6e6e 75%);background-size:10px 10px;background-position:0 0,5px 5px;border:2px solid #111;"></div>
<svg style="left:1135px;top:254px" width="18" height="11"><path d="M1 5.5 Q9 -2 17 5.5 Q9 13 1 5.5Z" fill="#fff" stroke="#5a6a88" stroke-width="1"/><circle cx="9" cy="5.5" r="3.4" fill="#2a4a8a"/><circle cx="9" cy="5.5" r="1.4" fill="#0a1a3a"/><circle cx="8" cy="4.4" r="0.9" fill="#fff"/></svg>
<div class="a" style="left:1244px;top:249px;width:118px;height:20px;overflow:hidden"><div class="t" style="left:0px;top:7.00px;font-size:10px;font-family:'Liberation Sans',sans-serif;color:#111;transform:scaleX(1.0052);transform-origin:0 0;">height map lvl 3</div></div>
<div class="a" style="left:1204px;top:279px;width:36px;height:16px;background-color:#9a9a9a;background-image:linear-gradient(45deg,#6e6e6e 25%,transparent 25%,transparent 75%,#6e6e6e 75%),linear-gradient(45deg,#6e6e6e 25%,transparent 25%,transparent 75%,#6e6e6e 75%);background-size:10px 10px;background-position:0 0,5px 5px;border:2px solid #111;"></div>
<svg style="left:1135px;top:282px" width="18" height="11"><path d="M1 5.5 Q9 -2 17 5.5 Q9 13 1 5.5Z" fill="#fff" stroke="#5a6a88" stroke-width="1"/><circle cx="9" cy="5.5" r="3.4" fill="#2a4a8a"/><circle cx="9" cy="5.5" r="1.4" fill="#0a1a3a"/><circle cx="8" cy="4.4" r="0.9" fill="#fff"/></svg>
<div class="a" style="left:1244px;top:277px;width:118px;height:20px;overflow:hidden"><div class="t" style="left:0px;top:7.00px;font-size:10px;font-family:'Liberation Sans',sans-serif;color:#111;transform:scaleX(1.0052);transform-origin:0 0;">height map lvl 2</div></div>
<div class="a" style="left:1204px;top:307px;width:36px;height:16px;background:#3a3a3a;border:2px solid #111"></div>
<svg style="left:1135px;top:310px" width="18" height="11"><path d="M1 5.5 Q9 -2 17 5.5 Q9 13 1 5.5Z" fill="#fff" stroke="#5a6a88" stroke-width="1"/><circle cx="9" cy="5.5" r="3.4" fill="#2a4a8a"/><circle cx="9" cy="5.5" r="1.4" fill="#0a1a3a"/><circle cx="8" cy="4.4" r="0.9" fill="#fff"/></svg>
<div class="a" style="left:1244px;top:305px;width:118px;height:20px;overflow:hidden"><div class="t" style="left:0px;top:7.00px;font-size:10px;font-family:'Liberation Sans',sans-serif;color:#111;transform:scaleX(1.0052);transform-origin:0 0;">height map lvl 1</div></div>
<div class="a" style="left:1204px;top:335px;width:36px;height:16px;background-color:#9a9a9a;background-image:linear-gradient(45deg,#6e6e6e 25%,transparent 25%,transparent 75%,#6e6e6e 75%),linear-gradient(45deg,#6e6e6e 25%,transparent 25%,transparent 75%,#6e6e6e 75%);background-size:10px 10px;background-position:0 0,5px 5px;border:2px solid #111;"></div>
<div class="a" style="left:1244px;top:333px;width:118px;height:20px;overflow:hidden"><div class="t" style="left:0px;top:7.00px;font-size:10px;font-family:'Liberation Sans',sans-serif;color:#111;transform:scaleX(1.0052);transform-origin:0 0;">Christian_Faber_Files_Metru</div></div>
<div class="a" style="left:1204px;top:363px;width:36px;height:16px;background:#3a3a3a;border:2px solid #111"></div>
<div class="a" style="left:1244px;top:361px;width:118px;height:20px;overflow:hidden"><div class="t" style="left:0px;top:7.00px;font-size:10px;font-family:'Liberation Sans',sans-serif;color:#111;transform:scaleX(1.0052);transform-origin:0 0;">Layer</div></div>
<div class="a" style="left:1204px;top:391px;width:36px;height:16px;background:#3a3a3a;border:2px solid #111"></div>
<svg style="left:1135px;top:394px" width="18" height="11"><path d="M1 5.5 Q9 -2 17 5.5 Q9 13 1 5.5Z" fill="#fff" stroke="#5a6a88" stroke-width="1"/><circle cx="9" cy="5.5" r="3.4" fill="#2a4a8a"/><circle cx="9" cy="5.5" r="1.4" fill="#0a1a3a"/><circle cx="8" cy="4.4" r="0.9" fill="#fff"/></svg>
<div class="a" style="left:1244px;top:389px;width:118px;height:20px;overflow:hidden"><div class="t" style="left:0px;top:7.00px;font-size:10px;font-family:'Liberation Sans',sans-serif;color:#111;font-weight:700;transform:scaleX(0.9914);transform-origin:0 0;">heightmap.bmp</div></div>
<div class="a" style="left:1362px;top:159px;width:6px;height:333px;background:#fff"></div>
<div class="a" style="left:1222px;top:197px;width:6px;height:10px;background:#c4c4c4"></div>
<div class="a" style="left:1206px;top:281px;width:12px;height:12px;background:#5a5a5a"></div>
<div class="a" style="left:1129px;top:474px;width:233px;height:17px;background:#f0f0f0"></div>
<svg style="left:1135px;top:478px" width="8" height="10"><path d="M6 1 L1.5 5 L6 9Z" fill="#555"/></svg>
<svg style="left:1349px;top:478px" width="8" height="10"><path d="M2 1 L6.5 5 L2 9Z" fill="#555"/></svg>
<div class="a" style="left:1148px;top:475px;width:130px;height:14px;border:1px solid #9a9a9a;border-radius:2px;background:linear-gradient(#fafafa,#e8e8e8 50%,#d4d4d4)"></div>
<svg style="left:1209px;top:478px" width="8" height="8"><rect x="0" y="1" width="1" height="6" fill="#555"/><rect x="3" y="1" width="1" height="6" fill="#555"/><rect x="6" y="1" width="1" height="6" fill="#555"/></svg>
<svg style="left:1137px;top:495px" width="13" height="16"><path d="M1 1 L8 1 L12 5 L12 15 L1 15Z" fill="#fbfbfb" stroke="#aaa"/></svg><svg style="left:1168px;top:495px" width="17" height="15"><path d="M1 3 L6 3 L7 5 L15 5 L15 14 L1 14Z" fill="#d8e0c0" stroke="#9a9a7a"/></svg><svg style="left:1201px;top:495px" width="16" height="16"><path d="M8 1 L15 8 L11 8 L11 15 L5 15 L5 8 L1 8Z" fill="#5ac83a" stroke="#3a9a2a"/></svg><svg style="left:1234px;top:495px" width="16" height="16"><path d="M8 15 L15 8 L11 8 L11 1 L5 1 L5 8 L1 8Z" fill="#5ac83a" stroke="#3a9a2a"/></svg><svg style="left:1267px;top:495px" width="17" height="16"><rect x="4" y="4" width="12" height="11" fill="#bbb" stroke="#555"/><rect x="1" y="1" width="12" height="11" fill="#dde" stroke="#555"/><rect x="3" y="4" width="7" height="5" fill="#4a6aa8"/></svg><svg style="left:1300px;top:495px" width="16" height="16"><path d="M8 2 L8 14 M4 5 L12 5 M2 9 Q3 14 8 14 Q13 14 14 9" stroke="#888" stroke-width="2" fill="none" stroke-dasharray="2 1"/></svg><svg style="left:1336px;top:495px" width="14" height="16"><rect x="1" y="4" width="12" height="11" rx="2" fill="#777" stroke="#333"/><rect x="0" y="1" width="14" height="4" rx="1" fill="#aaa" stroke="#333"/></svg>
<div class="a" style="left:1124px;top:514px;width:244px;height:1px;background:#9a9a9a"></div>
<div class="a" style="left:1124px;top:548px;width:244px;height:180px;background:#fff;border-top:1px solid #9a9a9a;border-left:1px solid #9a9a9a"></div>
<div class="a" style="left:1124px;top:521px;width:32px;height:28px;background:#fff;border:1px solid #9a9a9a;border-bottom:none"></div>
<div class="a" style="left:1155px;top:523px;width:26px;height:25px;background:#e4e4e4;border:1px solid #9a9a9a;border-bottom:none"></div>
<div class="a" style="left:1182px;top:523px;width:27px;height:25px;background:#e4e4e4;border:1px solid #9a9a9a;border-bottom:none"></div>
<div class="a" style="left:1128px;top:524px;width:22px;height:22px;border:1px solid #111;background:radial-gradient(circle,#333 0,#666 3px,#aaa 6px,#fff 9px)"></div>
<svg style="left:1143px;top:538px" width="8" height="8"><path d="M4 0 V8 M0 4 H8" stroke="#c02040" stroke-width="2"/></svg>
<div class="a" style="left:1158px;top:525px;width:21px;height:21px;border:1px solid #111;background:repeating-linear-gradient(90deg,#f8b040 0,#f8b040 5px,#e89a20 5px,#e89a20 6px)"></div>
<div class="a" style="left:1185px;top:525px;width:21px;height:21px;border:1px solid #111;background:linear-gradient(90deg,#3a3a3a 0,#3a3a3a 50%,#6a6a6a 50%)"></div>
<div class="a" style="left:1350px;top:530px;width:11px;height:11px;border:1px solid #8a8a8a;border-radius:2px;background:#f4f4f4"></div>
<svg style="left:1353px;top:532px" width="8" height="8"><path d="M6.5 0.5 L1 4 L6.5 7.5Z" fill="#555"/></svg>
<div class="a" style="left:1128px;top:553px;width:235px;height:20px;border:1px solid #b4b4b4;background:#fff"></div>
<div class="t" style="left:1132px;top:559.00px;font-size:10px;font-family:'Liberation Sans',sans-serif;color:#888;font-style:italic;transform:scaleX(1.1117);transform-origin:0 0;">filter</div>
<svg style="left:1346px;top:560px" width="11" height="7"><path d="M0.5 0.5 L10 0.5 L5.25 6Z" fill="#111"/></svg>
<div class="t" style="left:1128.2px;top:576.00px;font-size:10px;font-family:'Liberation Sans',sans-serif;color:#111;font-style:italic;transform:scaleX(0.9616);transform-origin:0 0;">Acrylic 04 (210 × 210)</div>
<div class="a" style="left:1128px;top:589px;width:235px;height:62px;border:1px solid #a0a0a0;background:#fff"></div>
<div class="a" style="left:1345px;top:590px;width:17px;height:60px;background:#f0f0f0"></div>
<svg style="left:1348px;top:597px" width="11" height="50"><path d="M1 6 L5.5 1 L10 6Z" fill="#333"/><rect x="0" y="12" width="11" height="5" rx="1" fill="#ddd" stroke="#999" stroke-width="0.8"/><path d="M1 43 L5.5 48 L10 43Z" fill="#333"/></svg>
<div class="a" style="left:1164px;top:591px;width:34px;height:34px;border:1.5px solid #111"></div>
<svg style="left:1129px;top:590px" width="216" height="60"><defs><radialGradient id="soft"><stop offset="0" stop-color="#333"/><stop offset="0.45" stop-color="#888"/><stop offset="1" stop-color="#fff" stop-opacity="0"/></radialGradient><linearGradient id="dk" x1="0.2" y1="0" x2="0" y2="1"><stop offset="0" stop-color="#000"/><stop offset="0.6" stop-color="#222"/><stop offset="1" stop-color="#ccc"/></linearGradient><clipPath id="bc"><rect x="0" y="0" width="216" height="60"/></clipPath></defs><g clip-path="url(#bc)"><rect x="15.6" y="18.9" width="1.2" height="1.2" fill="#222"/><rect x="15.8" y="18.3" width="1.0" height="1.0" fill="#222"/><rect x="20.3" y="22.5" width="1.0" height="1.0" fill="#222"/><rect x="19.2" y="15.7" width="0.8" height="0.8" fill="#222"/><rect x="23.2" y="21.9" width="1.1" height="1.1" fill="#222"/><rect x="24.7" y="19.8" width="1.3" height="1.3" fill="#222"/><rect x="16.8" y="11.1" width="0.7" height="0.7" fill="#222"/><rect x="22.4" y="17.6" width="0.6" height="0.6" fill="#222"/><rect x="19.6" y="19.9" width="0.6" height="0.6" fill="#222"/><rect x="16.2" y="18.2" width="1.2" height="1.2" fill="#222"/><rect x="15.0" y="16.1" width="0.9" height="0.9" fill="#222"/><rect x="17.4" y="12.4" width="0.8" height="0.8" fill="#222"/><rect x="25.0" y="16.8" width="1.2" height="1.2" fill="#222"/><rect x="18.4" y="13.2" width="0.8" height="0.8" fill="#222"/><rect x="18.9" y="18.0" width="1.1" height="1.1" fill="#222"/><rect x="14.8" y="22.5" width="0.9" height="0.9" fill="#222"/><rect x="24.0" y="14.5" width="0.6" height="0.6" fill="#222"/><rect x="20.4" y="26.8" width="0.9" height="0.9" fill="#222"/><rect x="21.6" y="16.4" width="0.7" height="0.7" fill="#222"/><rect x="15.7" y="10.6" width="0.8" height="0.8" fill="#222"/><rect x="20.9" y="19.1" width="1.3" height="1.3" fill="#222"/><rect x="19.0" y="15.4" width="0.8" height="0.8" fill="#222"/><rect x="19.4" y="17.5" width="1.2" height="1.2" fill="#222"/><rect x="20.6" y="22.9" width="0.9" height="0.9" fill="#222"/><rect x="20.6" y="24.7" width="0.7" height="0.7" fill="#222"/><rect x="18.5" y="15.8" width="0.9" height="0.9" fill="#222"/><rect x="19.4" y="20.3" width="1.3" height="1.3" fill="#222"/><rect x="19.7" y="13.4" width="1.2" height="1.2" fill="#222"/><rect x="19.6" y="21.6" width="1.2" height="1.2" fill="#222"/><rect x="18.5" y="15.9" width="1.3" height="1.3" fill="#222"/><rect x="19.4" y="20.2" width="1.1" height="1.1" fill="#222"/><rect x="18.0" y="20.2" width="0.7" height="0.7" fill="#222"/><rect x="22.1" y="20.6" width="0.8" height="0.8" fill="#222"/><rect x="17.0" y="14.3" width="0.9" height="0.9" fill="#222"/><rect x="22.0" y="15.5" width="1.0" height="1.0" fill="#222"/><rect x="19.9" y="15.2" width="0.7" height="0.7" fill="#222"/><rect x="23.2" y="12.0" width="0.8" height="0.8" fill="#222"/><rect x="20.7" y="24.8" width="1.3" height="1.3" fill="#222"/><rect x="20.9" y="26.9" width="1.2" height="1.2" fill="#222"/><rect x="16.8" y="13.9" width="0.7" height="0.7" fill="#222"/><rect x="24.6" y="19.6" width="0.8" height="0.8" fill="#222"/><rect x="18.5" y="13.9" width="1.2" height="1.2" fill="#222"/><rect x="17.4" y="14.9" width="0.7" height="0.7" fill="#222"/><rect x="18.9" y="16.0" width="0.8" height="0.8" fill="#222"/><rect x="14.2" y="13.5" width="1.0" height="1.0" fill="#222"/><rect x="18.0" y="27.0" width="0.7" height="0.7" fill="#222"/><rect x="20.8" y="17.4" width="0.9" height="0.9" fill="#222"/><rect x="20.2" y="17.9" width="0.9" height="0.9" fill="#222"/><rect x="18.1" y="16.2" width="0.9" height="0.9" fill="#222"/><rect x="23.6" y="10.2" width="1.1" height="1.1" fill="#222"/><rect x="17.7" y="10.7" width="0.7" height="0.7" fill="#222"/><rect x="19.2" y="17.1" width="1.2" height="1.2" fill="#222"/><rect x="17.2" y="6.9" width="0.6" height="0.6" fill="#222"/><rect x="17.0" y="12.7" width="1.1" height="1.1" fill="#222"/><rect x="16.5" y="27.0" width="0.7" height="0.7" fill="#222"/><rect x="14.6" y="14.6" width="1.2" height="1.2" fill="#222"/><rect x="18.6" y="9.0" width="1.2" height="1.2" fill="#222"/><rect x="21.0" y="14.8" width="1.1" height="1.1" fill="#222"/><rect x="23.3" y="11.3" width="0.9" height="0.9" fill="#222"/><rect x="20.3" y="7.7" width="1.0" height="1.0" fill="#222"/><rect x="17.2" y="13.7" width="1.0" height="1.0" fill="#222"/><rect x="18.5" y="16.3" width="1.0" height="1.0" fill="#222"/><rect x="24.3" y="16.6" width="1.1" height="1.1" fill="#222"/><rect x="15.5" y="22.4" width="1.0" height="1.0" fill="#222"/><rect x="14.2" y="20.4" width="0.7" height="0.7" fill="#222"/><rect x="19.0" y="16.5" width="1.0" height="1.0" fill="#222"/><rect x="17.4" y="17.4" width="1.1" height="1.1" fill="#222"/><rect x="15.1" y="17.1" width="1.2" height="1.2" fill="#222"/><rect x="19.0" y="17.2" width="0.8" height="0.8" fill="#222"/><rect x="18.4" y="14.6" width="0.7" height="0.7" fill="#222"/><rect x="22.4" y="12.8" width="0.9" height="0.9" fill="#222"/><rect x="20.7" y="14.5" width="1.1" height="1.1" fill="#222"/><rect x="19.9" y="21.9" width="1.2" height="1.2" fill="#222"/><rect x="23.6" y="12.0" width="0.9" height="0.9" fill="#222"/><rect x="17.2" y="15.1" width="0.7" height="0.7" fill="#222"/><rect x="13.9" y="17.2" width="1.2" height="1.2" fill="#222"/><rect x="17.6" y="6.8" width="0.8" height="0.8" fill="#222"/><rect x="20.4" y="21.7" width="0.8" height="0.8" fill="#222"/><rect x="19.6" y="21.8" width="1.0" height="1.0" fill="#222"/><rect x="16.9" y="17.2" width="1.2" height="1.2" fill="#222"/><rect x="21.9" y="16.4" width="0.7" height="0.7" fill="#222"/><rect x="24.2" y="18.9" width="0.6" height="0.6" fill="#222"/><rect x="18.1" y="10.6" width="0.8" height="0.8" fill="#222"/><rect x="19.0" y="16.7" width="0.7" height="0.7" fill="#222"/><rect x="18.8" y="17.1" width="1.2" height="1.2" fill="#222"/><rect x="19.1" y="18.9" width="0.6" height="0.6" fill="#222"/><rect x="17.0" y="13.1" width="1.0" height="1.0" fill="#222"/><rect x="16.2" y="9.5" width="1.3" height="1.3" fill="#222"/><rect x="18.4" y="14.6" width="0.9" height="0.9" fill="#222"/><rect x="19.0" y="17.2" width="0.9" height="0.9" fill="#222"/><circle cx="53" cy="17" r="12" fill="url(#soft)"/><rect x="52.8" y="16.0" width="0.6" height="0.6" fill="#444"/><rect x="50.1" y="21.3" width="0.7" height="0.7" fill="#444"/><rect x="48.7" y="13.2" width="0.7" height="0.7" fill="#444"/><rect x="54.9" y="10.1" width="0.5" height="0.5" fill="#444"/><rect x="57.9" y="14.8" width="0.6" height="0.6" fill="#444"/><rect x="48.6" y="18.3" width="0.9" height="0.9" fill="#444"/><rect x="50.1" y="19.8" width="0.9" height="0.9" fill="#444"/><rect x="55.2" y="9.9" width="0.7" height="0.7" fill="#444"/><rect x="52.3" y="16.0" width="0.8" height="0.8" fill="#444"/><rect x="55.0" y="12.7" width="0.8" height="0.8" fill="#444"/><rect x="54.6" y="23.9" width="0.9" height="0.9" fill="#444"/><rect x="56.8" y="16.5" width="0.8" height="0.8" fill="#444"/><rect x="49.9" y="23.5" width="0.8" height="0.8" fill="#444"/><rect x="52.8" y="17.3" width="0.7" height="0.7" fill="#444"/><rect x="47.5" y="15.2" width="0.7" height="0.7" fill="#444"/><rect x="59.1" y="18.1" width="0.5" height="0.5" fill="#444"/><rect x="53.3" y="16.1" width="0.6" height="0.6" fill="#444"/><rect x="53.2" y="16.3" width="0.6" height="0.6" fill="#444"/><rect x="47.6" y="16.4" width="0.8" height="0.8" fill="#444"/><rect x="50.2" y="10.1" width="0.7" height="0.7" fill="#444"/><rect x="53.4" y="16.9" width="0.6" height="0.6" fill="#444"/><rect x="51.2" y="16.7" width="0.8" height="0.8" fill="#444"/><rect x="50.6" y="14.2" width="0.8" height="0.8" fill="#444"/><rect x="51.2" y="16.3" width="0.7" height="0.7" fill="#444"/><rect x="57.0" y="11.2" width="0.6" height="0.6" fill="#444"/><rect x="57.6" y="10.8" width="0.7" height="0.7" fill="#444"/><rect x="52.0" y="16.5" width="0.7" height="0.7" fill="#444"/><rect x="48.6" y="16.9" width="0.5" height="0.5" fill="#444"/><rect x="56.5" y="16.3" width="0.7" height="0.7" fill="#444"/><rect x="54.3" y="13.2" width="0.7" height="0.7" fill="#444"/><rect x="52.9" y="16.7" width="0.7" height="0.7" fill="#444"/><rect x="46.5" y="20.9" width="0.9" height="0.9" fill="#444"/><rect x="52.6" y="20.2" width="0.6" height="0.6" fill="#444"/><rect x="47.3" y="19.5" width="0.9" height="0.9" fill="#444"/><rect x="51.0" y="17.3" width="0.6" height="0.6" fill="#444"/><rect x="47.6" y="12.1" width="0.6" height="0.6" fill="#444"/><rect x="53.0" y="16.9" width="0.6" height="0.6" fill="#444"/><rect x="53.7" y="22.0" width="0.6" height="0.6" fill="#444"/><rect x="50.2" y="20.6" width="0.5" height="0.5" fill="#444"/><rect x="52.9" y="16.4" width="0.7" height="0.7" fill="#444"/><rect x="86.0" y="22.5" width="1.2" height="1.2" fill="#000"/><rect x="79.8" y="20.6" width="1.1" height="1.1" fill="#000"/><rect x="82.1" y="17.3" width="0.9" height="0.9" fill="#000"/><rect x="79.8" y="11.3" width="1.2" height="1.2" fill="#000"/><rect x="91.3" y="10.8" width="1.5" height="1.5" fill="#000"/><rect x="87.1" y="28.0" width="1.4" height="1.4" fill="#000"/><rect x="90.9" y="14.5" width="1.0" height="1.0" fill="#000"/><rect x="90.3" y="15.8" width="1.6" height="1.6" fill="#000"/><rect x="88.7" y="15.7" width="0.9" height="0.9" fill="#000"/><rect x="85.2" y="12.7" width="0.8" height="0.8" fill="#000"/><rect x="89.5" y="11.8" width="1.4" height="1.4" fill="#000"/><rect x="90.9" y="22.9" width="1.3" height="1.3" fill="#000"/><rect x="90.6" y="18.5" width="1.3" height="1.3" fill="#000"/><rect x="96.0" y="11.8" width="0.8" height="0.8" fill="#000"/><rect x="75.8" y="17.6" width="1.2" height="1.2" fill="#000"/><rect x="84.3" y="13.9" width="0.8" height="0.8" fill="#000"/><rect x="87.3" y="19.0" width="1.2" height="1.2" fill="#000"/><rect x="77.5" y="17.2" width="0.8" height="0.8" fill="#000"/><rect x="87.8" y="22.2" width="1.5" height="1.5" fill="#000"/><rect x="97.4" y="17.3" width="0.8" height="0.8" fill="#000"/><rect x="96.8" y="22.4" width="1.1" height="1.1" fill="#000"/><rect x="86.6" y="11.9" width="1.1" height="1.1" fill="#000"/><rect x="78.8" y="17.3" width="1.2" height="1.2" fill="#000"/><rect x="95.7" y="18.8" width="1.5" height="1.5" fill="#000"/><rect x="89.1" y="24.8" width="1.4" height="1.4" fill="#000"/><rect x="82.3" y="20.5" width="0.8" height="0.8" fill="#000"/><rect x="85.0" y="17.9" width="1.5" height="1.5" fill="#000"/><rect x="89.1" y="8.8" width="1.5" height="1.5" fill="#000"/><rect x="81.2" y="12.9" width="1.2" height="1.2" fill="#000"/><rect x="74.1" y="17.7" width="1.4" height="1.4" fill="#000"/><rect x="85.4" y="29.3" width="1.4" height="1.4" fill="#000"/><rect x="87.9" y="7.6" width="1.1" height="1.1" fill="#000"/><rect x="94.8" y="11.3" width="1.3" height="1.3" fill="#000"/><rect x="87.1" y="7.8" width="1.1" height="1.1" fill="#000"/><rect x="85.6" y="15.6" width="1.0" height="1.0" fill="#000"/><rect x="85.2" y="18.2" width="1.0" height="1.0" fill="#000"/><rect x="80.2" y="11.1" width="0.9" height="0.9" fill="#000"/><rect x="94.8" y="14.8" width="1.0" height="1.0" fill="#000"/><rect x="81.4" y="10.8" width="1.2" height="1.2" fill="#000"/><rect x="76.8" y="25.7" width="1.3" height="1.3" fill="#000"/><rect x="82.9" y="8.3" width="1.6" height="1.6" fill="#000"/><rect x="94.9" y="19.3" width="1.4" height="1.4" fill="#000"/><rect x="85.7" y="24.9" width="0.7" height="0.7" fill="#000"/><rect x="88.2" y="24.3" width="0.8" height="0.8" fill="#000"/><rect x="85.9" y="29.3" width="1.2" height="1.2" fill="#000"/><rect x="74.3" y="17.4" width="1.2" height="1.2" fill="#000"/><rect x="95.2" y="17.7" width="1.4" height="1.4" fill="#000"/><rect x="93.8" y="22.1" width="1.4" height="1.4" fill="#000"/><rect x="97.0" y="21.2" width="0.8" height="0.8" fill="#000"/><rect x="81.9" y="18.7" width="1.1" height="1.1" fill="#000"/><rect x="84.3" y="16.6" width="1.6" height="1.6" fill="#000"/><rect x="78.8" y="21.9" width="1.2" height="1.2" fill="#000"/><rect x="82.2" y="22.2" width="1.3" height="1.3" fill="#000"/><rect x="80.8" y="15.9" width="1.3" height="1.3" fill="#000"/><rect x="85.7" y="18.9" width="0.9" height="0.9" fill="#000"/><rect x="89.8" y="19.0" width="1.4" height="1.4" fill="#000"/><rect x="77.3" y="25.2" width="1.4" height="1.4" fill="#000"/><rect x="97.3" y="21.7" width="1.6" height="1.6" fill="#000"/><rect x="96.1" y="23.0" width="1.1" height="1.1" fill="#000"/><rect x="74.3" y="19.7" width="0.9" height="0.9" fill="#000"/><rect x="74.6" y="16.3" width="1.4" height="1.4" fill="#000"/><rect x="74.4" y="20.3" width="1.4" height="1.4" fill="#000"/><rect x="83.4" y="16.0" width="1.3" height="1.3" fill="#000"/><rect x="81.6" y="19.3" width="0.7" height="0.7" fill="#000"/><rect x="82.6" y="17.4" width="1.1" height="1.1" fill="#000"/><rect x="82.3" y="11.5" width="0.9" height="0.9" fill="#000"/><rect x="79.8" y="14.5" width="1.4" height="1.4" fill="#000"/><rect x="74.2" y="15.7" width="1.6" height="1.6" fill="#000"/><rect x="85.5" y="12.9" width="0.8" height="0.8" fill="#000"/><rect x="94.1" y="11.5" width="1.3" height="1.3" fill="#000"/><rect x="82.5" y="22.2" width="1.3" height="1.3" fill="#000"/><rect x="78.0" y="14.5" width="1.3" height="1.3" fill="#000"/><rect x="86.1" y="13.6" width="0.9" height="0.9" fill="#000"/><rect x="97.3" y="16.6" width="1.5" height="1.5" fill="#000"/><rect x="88.2" y="18.5" width="0.9" height="0.9" fill="#000"/><rect x="77.9" y="22.1" width="0.8" height="0.8" fill="#000"/><rect x="83.6" y="17.4" width="0.8" height="0.8" fill="#000"/><rect x="82.3" y="10.5" width="1.3" height="1.3" fill="#000"/><rect x="80.6" y="23.5" width="0.9" height="0.9" fill="#000"/><rect x="80.4" y="26.4" width="1.5" height="1.5" fill="#000"/><rect x="89.0" y="19.5" width="1.4" height="1.4" fill="#000"/><rect x="78.7" y="10.8" width="0.9" height="0.9" fill="#000"/><rect x="81.3" y="20.4" width="1.4" height="1.4" fill="#000"/><rect x="79.7" y="24.8" width="1.6" height="1.6" fill="#000"/><rect x="82.2" y="25.4" width="1.4" height="1.4" fill="#000"/><rect x="92.3" y="14.6" width="1.0" height="1.0" fill="#000"/><rect x="95.1" y="24.3" width="0.8" height="0.8" fill="#000"/><rect x="93.4" y="22.2" width="1.1" height="1.1" fill="#000"/><rect x="83.7" y="12.7" width="1.4" height="1.4" fill="#000"/><rect x="90.2" y="20.2" width="1.3" height="1.3" fill="#000"/><rect x="91.1" y="20.9" width="1.4" height="1.4" fill="#000"/><rect x="84.1" y="12.7" width="0.8" height="0.8" fill="#000"/><rect x="79.8" y="25.7" width="1.0" height="1.0" fill="#000"/><rect x="93.2" y="24.6" width="1.2" height="1.2" fill="#000"/><rect x="96.1" y="12.3" width="1.5" height="1.5" fill="#000"/><rect x="76.3" y="22.0" width="1.0" height="1.0" fill="#000"/><rect x="83.1" y="24.3" width="1.5" height="1.5" fill="#000"/><rect x="90.1" y="14.8" width="1.0" height="1.0" fill="#000"/><rect x="81.7" y="22.9" width="1.1" height="1.1" fill="#000"/><rect x="82.6" y="20.9" width="1.2" height="1.2" fill="#000"/><rect x="88.4" y="10.1" width="1.5" height="1.5" fill="#000"/><rect x="82.1" y="16.4" width="1.4" height="1.4" fill="#000"/><rect x="90.1" y="14.2" width="0.7" height="0.7" fill="#000"/><rect x="77.7" y="17.2" width="1.2" height="1.2" fill="#000"/><rect x="95.1" y="16.1" width="1.4" height="1.4" fill="#000"/><rect x="93.7" y="21.3" width="1.4" height="1.4" fill="#000"/><rect x="88.3" y="19.3" width="1.4" height="1.4" fill="#000"/><rect x="88.2" y="16.4" width="1.3" height="1.3" fill="#000"/><rect x="92.2" y="25.9" width="1.3" height="1.3" fill="#000"/><rect x="86.1" y="22.8" width="1.4" height="1.4" fill="#000"/><rect x="75.9" y="16.6" width="1.1" height="1.1" fill="#000"/><rect x="79.8" y="28.0" width="1.3" height="1.3" fill="#000"/><rect x="77.7" y="18.3" width="1.3" height="1.3" fill="#000"/><rect x="83.0" y="7.0" width="1.1" height="1.1" fill="#000"/><rect x="90.3" y="9.6" width="1.5" height="1.5" fill="#000"/><rect x="89.7" y="7.9" width="1.5" height="1.5" fill="#000"/><rect x="94.9" y="15.6" width="1.2" height="1.2" fill="#000"/><rect x="83.4" y="7.8" width="1.1" height="1.1" fill="#000"/><rect x="82.7" y="19.8" width="1.4" height="1.4" fill="#000"/><rect x="92.7" y="17.6" width="0.9" height="0.9" fill="#000"/><rect x="88.0" y="24.9" width="1.0" height="1.0" fill="#000"/><rect x="88.2" y="17.6" width="1.0" height="1.0" fill="#000"/><rect x="92.9" y="24.1" width="1.4" height="1.4" fill="#000"/><rect x="87.0" y="20.1" width="1.1" height="1.1" fill="#000"/><rect x="76.2" y="12.3" width="0.7" height="0.7" fill="#000"/><rect x="89.4" y="20.7" width="0.9" height="0.9" fill="#000"/><rect x="86.9" y="27.8" width="1.2" height="1.2" fill="#000"/><rect x="86.7" y="22.3" width="1.0" height="1.0" fill="#000"/><rect x="90.8" y="27.0" width="1.0" height="1.0" fill="#000"/><rect x="75.9" y="14.8" width="1.1" height="1.1" fill="#000"/><rect x="85.3" y="29.1" width="1.5" height="1.5" fill="#000"/><rect x="81.4" y="25.0" width="1.6" height="1.6" fill="#000"/><rect x="81.2" y="18.5" width="0.7" height="0.7" fill="#000"/><rect x="95.9" y="14.6" width="1.0" height="1.0" fill="#000"/><rect x="78.1" y="16.6" width="0.9" height="0.9" fill="#000"/><rect x="95.3" y="17.4" width="0.9" height="0.9" fill="#000"/><rect x="93.6" y="18.5" width="1.0" height="1.0" fill="#000"/><rect x="88.8" y="8.6" width="1.2" height="1.2" fill="#000"/><rect x="88.2" y="21.3" width="1.0" height="1.0" fill="#000"/><rect x="85.3" y="29.0" width="1.2" height="1.2" fill="#000"/><rect x="78.2" y="8.9" width="0.9" height="0.9" fill="#000"/><rect x="82.2" y="17.2" width="1.4" height="1.4" fill="#000"/><rect x="96.7" y="18.1" width="1.5" height="1.5" fill="#000"/><rect x="87.2" y="15.6" width="0.9" height="0.9" fill="#000"/><rect x="85.4" y="15.1" width="1.1" height="1.1" fill="#000"/><rect x="74.5" y="20.3" width="1.2" height="1.2" fill="#000"/><rect x="89.7" y="13.4" width="1.4" height="1.4" fill="#000"/><rect x="76.1" y="23.7" width="0.8" height="0.8" fill="#000"/><rect x="88.2" y="13.8" width="1.2" height="1.2" fill="#000"/><rect x="82.1" y="17.4" width="1.4" height="1.4" fill="#000"/><rect x="83.8" y="23.5" width="0.8" height="0.8" fill="#000"/><rect x="83.4" y="25.1" width="1.3" height="1.3" fill="#000"/><rect x="79.9" y="25.4" width="0.8" height="0.8" fill="#000"/><rect x="80.1" y="22.7" width="1.6" height="1.6" fill="#000"/><rect x="90.5" y="9.8" width="0.7" height="0.7" fill="#000"/><rect x="79.0" y="24.8" width="0.9" height="0.9" fill="#000"/><rect x="79.1" y="15.1" width="0.7" height="0.7" fill="#000"/><rect x="96.5" y="17.4" width="0.9" height="0.9" fill="#000"/><rect x="81.7" y="14.2" width="1.0" height="1.0" fill="#000"/><rect x="80.4" y="16.6" width="1.0" height="1.0" fill="#000"/><rect x="78.7" y="23.9" width="0.9" height="0.9" fill="#000"/><rect x="89.1" y="27.5" width="1.0" height="1.0" fill="#000"/><rect x="94.0" y="15.1" width="1.4" height="1.4" fill="#000"/><rect x="80.7" y="27.3" width="0.8" height="0.8" fill="#000"/><rect x="87.8" y="20.3" width="1.3" height="1.3" fill="#000"/><rect x="84.9" y="13.9" width="1.1" height="1.1" fill="#000"/><rect x="90.6" y="10.5" width="0.8" height="0.8" fill="#000"/><rect x="86.6" y="21.9" width="0.8" height="0.8" fill="#000"/><rect x="83.9" y="19.4" width="1.5" height="1.5" fill="#000"/><rect x="78.8" y="21.6" width="1.3" height="1.3" fill="#000"/><rect x="87.1" y="7.4" width="1.0" height="1.0" fill="#000"/><rect x="82.5" y="24.1" width="0.7" height="0.7" fill="#000"/><rect x="78.1" y="23.7" width="1.6" height="1.6" fill="#000"/><rect x="88.3" y="8.9" width="1.2" height="1.2" fill="#000"/><rect x="92.1" y="18.7" width="1.0" height="1.0" fill="#000"/><rect x="84.2" y="15.5" width="1.0" height="1.0" fill="#000"/><rect x="75.6" y="17.4" width="1.4" height="1.4" fill="#000"/><rect x="83.0" y="15.4" width="1.4" height="1.4" fill="#000"/><rect x="92.9" y="13.2" width="1.0" height="1.0" fill="#000"/><rect x="82.3" y="18.0" width="1.3" height="1.3" fill="#000"/><rect x="94.0" y="17.3" width="1.3" height="1.3" fill="#000"/><rect x="88.3" y="14.1" width="1.6" height="1.6" fill="#000"/><rect x="82.8" y="14.7" width="0.8" height="0.8" fill="#000"/><rect x="86.3" y="26.6" width="1.3" height="1.3" fill="#000"/><rect x="80.5" y="28.1" width="1.0" height="1.0" fill="#000"/><rect x="82.7" y="18.8" width="1.6" height="1.6" fill="#000"/><rect x="93.4" y="26.5" width="1.2" height="1.2" fill="#000"/><rect x="78.1" y="14.8" width="0.9" height="0.9" fill="#000"/><rect x="96.1" y="11.6" width="1.4" height="1.4" fill="#000"/><rect x="83.3" y="16.0" width="1.4" height="1.4" fill="#000"/><rect x="83.3" y="28.9" width="0.9" height="0.9" fill="#000"/><rect x="76.4" y="13.2" width="0.9" height="0.9" fill="#000"/><rect x="83.6" y="17.2" width="0.7" height="0.7" fill="#000"/><rect x="91.1" y="28.8" width="1.5" height="1.5" fill="#000"/><rect x="82.8" y="13.0" width="1.3" height="1.3" fill="#000"/><rect x="85.5" y="11.3" width="1.2" height="1.2" fill="#000"/><rect x="86.3" y="17.0" width="0.9" height="0.9" fill="#000"/><rect x="82.3" y="18.7" width="1.0" height="1.0" fill="#000"/><rect x="82.2" y="16.2" width="1.2" height="1.2" fill="#000"/><rect x="85.3" y="26.5" width="1.0" height="1.0" fill="#000"/><rect x="84.9" y="16.7" width="1.3" height="1.3" fill="#000"/><rect x="93.2" y="27.2" width="1.2" height="1.2" fill="#000"/><rect x="79.1" y="19.3" width="1.3" height="1.3" fill="#000"/><rect x="82.2" y="8.6" width="1.4" height="1.4" fill="#000"/><rect x="74.1" y="19.1" width="1.5" height="1.5" fill="#000"/><rect x="90.3" y="12.5" width="1.1" height="1.1" fill="#000"/><rect x="75.7" y="13.4" width="1.2" height="1.2" fill="#000"/><rect x="78.8" y="16.9" width="1.5" height="1.5" fill="#000"/><rect x="85.1" y="19.9" width="1.4" height="1.4" fill="#000"/><rect x="94.1" y="12.2" width="1.2" height="1.2" fill="#000"/><rect x="86.1" y="12.1" width="1.2" height="1.2" fill="#000"/><rect x="89.1" y="19.5" width="1.1" height="1.1" fill="#000"/><rect x="79.1" y="17.9" width="0.7" height="0.7" fill="#000"/><rect x="83.2" y="10.3" width="0.9" height="0.9" fill="#000"/><rect x="83.6" y="24.5" width="0.9" height="0.9" fill="#000"/><rect x="96.3" y="22.7" width="1.6" height="1.6" fill="#000"/><rect x="80.4" y="8.5" width="1.1" height="1.1" fill="#000"/><rect x="87.7" y="13.4" width="1.4" height="1.4" fill="#000"/><rect x="75.7" y="13.4" width="0.8" height="0.8" fill="#000"/><rect x="86.9" y="14.7" width="1.2" height="1.2" fill="#000"/><path d="M111 6 L114 12" stroke="#777" stroke-width="1.5"/><path d="M131 33 L136 28 L136 33Z" fill="#e07070"/><circle cx="170.7" cy="6.0" r="0.7" fill="#333"/><circle cx="153.8" cy="13.8" r="0.6" fill="#333"/><circle cx="169.3" cy="25.6" r="0.9" fill="#333"/><circle cx="155.3" cy="20.1" r="0.5" fill="#333"/><circle cx="146.8" cy="27.6" r="0.8" fill="#333"/><circle cx="159.0" cy="28.4" r="1.5" fill="#333"/><circle cx="158.3" cy="11.0" r="0.8" fill="#333"/><circle cx="170.0" cy="27.5" r="0.7" fill="#333"/><circle cx="167.8" cy="14.5" r="1.0" fill="#333"/><circle cx="150.5" cy="27.1" r="1.5" fill="#333"/><circle cx="181.7" cy="21.2" r="0.8" fill="#222"/><circle cx="200.6" cy="7.2" r="0.7" fill="#222"/><circle cx="196.3" cy="13.5" r="1.8" fill="#222"/><circle cx="200.3" cy="23.1" r="0.8" fill="#222"/><circle cx="195.5" cy="28.5" r="1.2" fill="#222"/><circle cx="178.2" cy="11.4" r="1.0" fill="#222"/><circle cx="195.9" cy="10.7" r="0.8" fill="#222"/><circle cx="182.6" cy="22.0" r="1.6" fill="#222"/><circle cx="186.4" cy="21.9" r="1.7" fill="#222"/><circle cx="192.5" cy="11.5" r="1.0" fill="#222"/><circle cx="201.9" cy="22.0" r="1.0" fill="#222"/><circle cx="193.9" cy="8.2" r="1.9" fill="#222"/><circle cx="188.3" cy="18.7" r="1.3" fill="#222"/><circle cx="177.3" cy="20.4" r="1.0" fill="#222"/><circle cx="183.0" cy="25.3" r="0.7" fill="#222"/><circle cx="184.0" cy="24.1" r="0.9" fill="#222"/><circle cx="183.8" cy="19.2" r="0.8" fill="#222"/><circle cx="201.1" cy="29.7" r="0.6" fill="#222"/><path d="M27.5 32 H34.5 M31 28.5 V35.5" stroke="#c02040" stroke-width="1.4"/><path d="M62.5 32 H69.5 M66 28.5 V35.5" stroke="#c02040" stroke-width="1.4"/><path d="M96.5 32 H103.5 M100 28.5 V35.5" stroke="#c02040" stroke-width="1.4"/><path d="M163.5 32 H170.5 M167 28.5 V35.5" stroke="#000" stroke-width="1.4"/><path d="M198.0 32 H205.0 M201.5 28.5 V35.5" stroke="#000" stroke-width="1.4"/><rect x="16.0" y="54.5" width="1" height="1" fill="#000"/><rect x="14.0" y="58.4" width="1" height="1" fill="#000"/><rect x="17.0" y="42.0" width="1" height="1" fill="#000"/><rect x="18.5" y="52.2" width="1" height="1" fill="#000"/><rect x="13.4" y="52.5" width="1" height="1" fill="#000"/><rect x="24.4" y="49.4" width="1" height="1" fill="#000"/><rect x="17.1" y="56.6" width="1" height="1" fill="#000"/><rect x="21.8" y="49.5" width="1" height="1" fill="#000"/><rect x="28.7" y="41.8" width="1" height="1" fill="#000"/><rect x="24.3" y="41.6" width="1" height="1" fill="#000"/><rect x="19.8" y="43.2" width="1" height="1" fill="#000"/><rect x="15.5" y="55.0" width="1" height="1" fill="#000"/><rect x="24.5" y="55.4" width="1" height="1" fill="#000"/><rect x="10.1" y="48.8" width="1" height="1" fill="#000"/><rect x="9.8" y="50.8" width="1" height="1" fill="#000"/><rect x="17.0" y="38.8" width="1" height="1" fill="#000"/><circle cx="44.7" cy="44.2" r="2.0" fill="none" stroke="#000" stroke-width="0.9"/><circle cx="56.6" cy="46.4" r="1.4" fill="none" stroke="#000" stroke-width="0.9"/><circle cx="61.4" cy="50.9" r="1.8" fill="none" stroke="#000" stroke-width="0.9"/><circle cx="47.3" cy="52.2" r="2.3" fill="none" stroke="#000" stroke-width="0.9"/><circle cx="63.3" cy="55.0" r="2.0" fill="none" stroke="#000" stroke-width="0.9"/><circle cx="42.7" cy="47.1" r="1.5" fill="none" stroke="#000" stroke-width="0.9"/><circle cx="57.1" cy="55.3" r="1.3" fill="none" stroke="#000" stroke-width="0.9"/><circle cx="49.3" cy="58.7" r="1.9" fill="none" stroke="#000" stroke-width="0.9"/><circle cx="52.1" cy="59.2" r="1.3" fill="none" stroke="#000" stroke-width="0.9"/><circle cx="55.1" cy="45.5" r="1.6" fill="none" stroke="#000" stroke-width="0.9"/><circle cx="58.4" cy="58.4" r="2.4" fill="none" stroke="#000" stroke-width="0.9"/><circle cx="53.7" cy="47.1" r="1.8" fill="none" stroke="#000" stroke-width="0.9"/><circle cx="49.3" cy="54.2" r="2.6" fill="none" stroke="#000" stroke-width="0.9"/><circle cx="61.1" cy="52.2" r="2.3" fill="none" stroke="#000" stroke-width="0.9"/><circle cx="57.5" cy="49.6" r="1.8" fill="none" stroke="#000" stroke-width="0.9"/><circle cx="52.9" cy="47.6" r="1.5" fill="none" stroke="#000" stroke-width="0.9"/><circle cx="56.5" cy="47.1" r="1.8" fill="none" stroke="#000" stroke-width="0.9"/><circle cx="50.7" cy="57.5" r="1.3" fill="none" stroke="#000" stroke-width="0.9"/><circle cx="64.7" cy="52.6" r="2.3" fill="none" stroke="#000" stroke-width="0.9"/><circle cx="52.4" cy="44.3" r="1.6" fill="none" stroke="#000" stroke-width="0.9"/><circle cx="47.4" cy="48.1" r="1.8" fill="none" stroke="#000" stroke-width="0.9"/><circle cx="59.6" cy="47.0" r="1.7" fill="none" stroke="#000" stroke-width="0.9"/><circle cx="62.3" cy="48.9" r="1.3" fill="none" stroke="#000" stroke-width="0.9"/><circle cx="45.1" cy="55.5" r="1.3" fill="none" stroke="#000" stroke-width="0.9"/><circle cx="47.5" cy="58.3" r="2.4" fill="none" stroke="#000" stroke-width="0.9"/><circle cx="43.5" cy="43.9" r="1.8" fill="none" stroke="#000" stroke-width="0.9"/><circle cx="44.4" cy="56.9" r="1.7" fill="none" stroke="#000" stroke-width="0.9"/><circle cx="54.1" cy="44.5" r="1.7" fill="none" stroke="#000" stroke-width="0.9"/><rect x="56.5" y="57.8" width="0.6" height="0.6" fill="#000"/><rect x="54.3" y="54.2" width="0.7" height="0.7" fill="#000"/><rect x="50.3" y="56.9" width="1.0" height="1.0" fill="#000"/><rect x="48.0" y="39.4" width="0.6" height="0.6" fill="#000"/><rect x="51.5" y="51.4" width="0.8" height="0.8" fill="#000"/><rect x="49.6" y="54.0" width="0.5" height="0.5" fill="#000"/><rect x="55.1" y="54.6" width="0.7" height="0.7" fill="#000"/><rect x="62.1" y="45.2" width="0.6" height="0.6" fill="#000"/><rect x="50.7" y="52.7" width="1.0" height="1.0" fill="#000"/><rect x="46.1" y="58.3" width="0.9" height="0.9" fill="#000"/><rect x="53.7" y="49.5" width="0.7" height="0.7" fill="#000"/><rect x="51.3" y="51.5" width="0.9" height="0.9" fill="#000"/><rect x="48.1" y="59.6" width="0.8" height="0.8" fill="#000"/><rect x="59.4" y="52.3" width="0.6" height="0.6" fill="#000"/><rect x="56.3" y="50.9" width="0.8" height="0.8" fill="#000"/><rect x="58.6" y="51.1" width="0.7" height="0.7" fill="#000"/><rect x="49.9" y="49.1" width="0.9" height="0.9" fill="#000"/><rect x="52.3" y="60.4" width="0.8" height="0.8" fill="#000"/><rect x="55.6" y="53.4" width="0.6" height="0.6" fill="#000"/><rect x="51.4" y="43.3" width="0.7" height="0.7" fill="#000"/><rect x="56.1" y="46.6" width="0.6" height="0.6" fill="#000"/><rect x="50.5" y="53.7" width="0.5" height="0.5" fill="#000"/><rect x="62.3" y="51.4" width="0.8" height="0.8" fill="#000"/><rect x="57.6" y="38.1" width="0.6" height="0.6" fill="#000"/><rect x="47.1" y="39.2" width="0.6" height="0.6" fill="#000"/><rect x="49.4" y="40.9" width="1.0" height="1.0" fill="#000"/><rect x="56.2" y="46.5" width="0.8" height="0.8" fill="#000"/><rect x="59.1" y="53.8" width="0.7" height="0.7" fill="#000"/><rect x="59.2" y="52.5" width="0.7" height="0.7" fill="#000"/><rect x="47.7" y="50.1" width="0.6" height="0.6" fill="#000"/><rect x="46.7" y="54.4" width="0.6" height="0.6" fill="#000"/><rect x="50.6" y="45.9" width="0.5" height="0.5" fill="#000"/><rect x="49.1" y="56.0" width="0.6" height="0.6" fill="#000"/><rect x="44.2" y="45.0" width="0.8" height="0.8" fill="#000"/><rect x="52.7" y="49.1" width="0.7" height="0.7" fill="#000"/><rect x="51.8" y="51.4" width="0.7" height="0.7" fill="#000"/><rect x="60.5" y="52.7" width="0.8" height="0.8" fill="#000"/><rect x="47.2" y="51.1" width="0.6" height="0.6" fill="#000"/><rect x="59.1" y="50.9" width="0.9" height="0.9" fill="#000"/><rect x="48.3" y="48.0" width="0.8" height="0.8" fill="#000"/><rect x="56.0" y="57.0" width="0.8" height="0.8" fill="#000"/><rect x="59.1" y="48.2" width="0.8" height="0.8" fill="#000"/><rect x="63.1" y="46.2" width="0.8" height="0.8" fill="#000"/><rect x="47.9" y="45.2" width="0.7" height="0.7" fill="#000"/><rect x="51.1" y="61.3" width="0.9" height="0.9" fill="#000"/><rect x="44.0" y="58.2" width="0.5" height="0.5" fill="#000"/><rect x="58.3" y="56.1" width="0.7" height="0.7" fill="#000"/><rect x="44.8" y="59.8" width="0.6" height="0.6" fill="#000"/><rect x="54.6" y="54.3" width="0.8" height="0.8" fill="#000"/><rect x="53.0" y="50.1" width="0.8" height="0.8" fill="#000"/><rect x="49.2" y="53.0" width="0.7" height="0.7" fill="#000"/><rect x="48.0" y="43.1" width="0.8" height="0.8" fill="#000"/><rect x="42.4" y="45.7" width="1.0" height="1.0" fill="#000"/><rect x="49.9" y="55.4" width="0.9" height="0.9" fill="#000"/><rect x="49.0" y="59.5" width="0.8" height="0.8" fill="#000"/><rect x="48.1" y="38.3" width="0.9" height="0.9" fill="#000"/><rect x="58.0" y="57.9" width="0.7" height="0.7" fill="#000"/><rect x="47.0" y="47.5" width="0.6" height="0.6" fill="#000"/><rect x="52.9" y="41.6" width="0.6" height="0.6" fill="#000"/><rect x="53.0" y="55.9" width="0.6" height="0.6" fill="#000"/><circle cx="82.8" cy="49.6" r="2.1" fill="none" stroke="#000" stroke-width="1.0"/><circle cx="90.5" cy="51.6" r="3.0" fill="none" stroke="#000" stroke-width="1.0"/><circle cx="93.1" cy="55.2" r="3.1" fill="none" stroke="#000" stroke-width="1.0"/><circle cx="82.2" cy="50.6" r="3.2" fill="none" stroke="#000" stroke-width="1.0"/><circle cx="88.9" cy="48.0" r="2.4" fill="none" stroke="#000" stroke-width="1.0"/><circle cx="76.3" cy="49.5" r="2.5" fill="none" stroke="#000" stroke-width="1.0"/><circle cx="85.7" cy="44.1" r="3.0" fill="none" stroke="#000" stroke-width="1.0"/><circle cx="83.8" cy="56.1" r="3.1" fill="none" stroke="#000" stroke-width="1.0"/><circle cx="93.0" cy="40.9" r="2.8" fill="none" stroke="#000" stroke-width="1.0"/><circle cx="78.1" cy="54.8" r="2.9" fill="none" stroke="#000" stroke-width="1.0"/><circle cx="92.2" cy="40.6" r="2.2" fill="none" stroke="#000" stroke-width="1.0"/><circle cx="80.0" cy="56.9" r="2.3" fill="none" stroke="#000" stroke-width="1.0"/><circle cx="87.6" cy="51.3" r="2.8" fill="none" stroke="#000" stroke-width="1.0"/><circle cx="98.0" cy="45.7" r="2.2" fill="none" stroke="#000" stroke-width="1.0"/><circle cx="84.0" cy="42.8" r="2.9" fill="none" stroke="#000" stroke-width="1.0"/><circle cx="77.8" cy="57.0" r="3.4" fill="none" stroke="#000" stroke-width="1.0"/><circle cx="96.7" cy="53.1" r="2.2" fill="none" stroke="#000" stroke-width="1.0"/><circle cx="93.2" cy="51.7" r="3.0" fill="none" stroke="#000" stroke-width="1.0"/><circle cx="91.2" cy="49.8" r="2.5" fill="none" stroke="#000" stroke-width="1.0"/><circle cx="95.7" cy="51.5" r="2.7" fill="none" stroke="#000" stroke-width="1.0"/><circle cx="82.3" cy="54.8" r="3.1" fill="none" stroke="#000" stroke-width="1.0"/><circle cx="90.4" cy="44.6" r="2.5" fill="none" stroke="#000" stroke-width="1.0"/><circle cx="79.2" cy="42.9" r="3.4" fill="none" stroke="#000" stroke-width="1.0"/><circle cx="79.3" cy="56.4" r="2.8" fill="none" stroke="#000" stroke-width="1.0"/><circle cx="88.4" cy="45.6" r="2.2" fill="none" stroke="#000" stroke-width="1.0"/><circle cx="96.1" cy="57.2" r="2.4" fill="none" stroke="#000" stroke-width="1.0"/><rect x="115.5" y="51.3" width="0.9" height="0.9" fill="#000"/><rect x="129.7" y="52.1" width="0.7" height="0.7" fill="#000"/><rect x="115.2" y="46.6" width="0.8" height="0.8" fill="#000"/><rect x="112.2" y="51.8" width="0.8" height="0.8" fill="#000"/><rect x="123.1" y="52.0" width="1.3" height="1.3" fill="#000"/><rect x="118.7" y="54.1" width="0.7" height="0.7" fill="#000"/><rect x="107.1" y="52.2" width="0.8" height="0.8" fill="#000"/><rect x="126.1" y="44.8" width="0.9" height="0.9" fill="#000"/><rect x="122.9" y="43.9" width="0.6" height="0.6" fill="#000"/><rect x="110.0" y="48.0" width="1.1" height="1.1" fill="#000"/><rect x="117.9" y="62.5" width="1.3" height="1.3" fill="#000"/><rect x="128.6" y="50.7" width="1.3" height="1.3" fill="#000"/><rect x="119.1" y="46.0" width="0.6" height="0.6" fill="#000"/><rect x="122.2" y="54.6" width="0.7" height="0.7" fill="#000"/><rect x="112.9" y="59.1" width="0.8" height="0.8" fill="#000"/><rect x="118.7" y="50.9" width="0.8" height="0.8" fill="#000"/><rect x="121.3" y="50.7" width="1.0" height="1.0" fill="#000"/><rect x="124.3" y="41.1" width="1.2" height="1.2" fill="#000"/><rect x="110.6" y="57.4" width="1.3" height="1.3" fill="#000"/><rect x="121.4" y="39.2" width="0.7" height="0.7" fill="#000"/><rect x="127.8" y="48.7" width="1.2" height="1.2" fill="#000"/><rect x="120.0" y="62.4" width="0.6" height="0.6" fill="#000"/><rect x="114.5" y="48.3" width="0.9" height="0.9" fill="#000"/><rect x="112.8" y="58.1" width="1.2" height="1.2" fill="#000"/><rect x="113.1" y="58.2" width="0.9" height="0.9" fill="#000"/><rect x="117.7" y="62.2" width="0.9" height="0.9" fill="#000"/><rect x="126.2" y="54.9" width="1.2" height="1.2" fill="#000"/><rect x="122.7" y="61.0" width="1.0" height="1.0" fill="#000"/><rect x="117.7" y="46.4" width="0.7" height="0.7" fill="#000"/><rect x="124.8" y="56.6" width="0.9" height="0.9" fill="#000"/><rect x="129.2" y="51.5" width="0.9" height="0.9" fill="#000"/><rect x="115.9" y="58.9" width="1.4" height="1.4" fill="#000"/><rect x="123.4" y="61.8" width="0.9" height="0.9" fill="#000"/><rect x="120.1" y="47.1" width="1.4" height="1.4" fill="#000"/><rect x="108.5" y="56.0" width="0.8" height="0.8" fill="#000"/><rect x="110.8" y="56.5" width="0.7" height="0.7" fill="#000"/><rect x="118.4" y="60.8" width="1.4" height="1.4" fill="#000"/><rect x="117.6" y="55.6" width="0.9" height="0.9" fill="#000"/><rect x="125.0" y="50.7" width="1.1" height="1.1" fill="#000"/><rect x="112.5" y="57.7" width="0.8" height="0.8" fill="#000"/><rect x="110.9" y="43.5" width="1.3" height="1.3" fill="#000"/><rect x="113.6" y="44.8" width="1.1" height="1.1" fill="#000"/><rect x="129.0" y="58.2" width="1.2" height="1.2" fill="#000"/><rect x="109.9" y="53.8" width="0.9" height="0.9" fill="#000"/><rect x="115.3" y="54.8" width="1.1" height="1.1" fill="#000"/><rect x="111.6" y="47.2" width="0.6" height="0.6" fill="#000"/><rect x="113.9" y="45.2" width="1.1" height="1.1" fill="#000"/><rect x="109.6" y="44.5" width="0.7" height="0.7" fill="#000"/><rect x="107.3" y="53.3" width="1.2" height="1.2" fill="#000"/><rect x="115.7" y="60.5" width="1.4" height="1.4" fill="#000"/><rect x="110.1" y="57.5" width="0.7" height="0.7" fill="#000"/><rect x="129.1" y="50.5" width="0.8" height="0.8" fill="#000"/><rect x="125.6" y="42.8" width="1.4" height="1.4" fill="#000"/><rect x="125.5" y="41.6" width="1.0" height="1.0" fill="#000"/><rect x="123.3" y="50.9" width="1.3" height="1.3" fill="#000"/><rect x="118.4" y="45.2" width="1.2" height="1.2" fill="#000"/><rect x="110.9" y="53.5" width="1.3" height="1.3" fill="#000"/><rect x="122.3" y="57.0" width="1.1" height="1.1" fill="#000"/><rect x="128.7" y="55.0" width="1.2" height="1.2" fill="#000"/><rect x="113.6" y="51.3" width="1.2" height="1.2" fill="#000"/><rect x="127.0" y="42.7" width="1.0" height="1.0" fill="#000"/><rect x="129.6" y="45.0" width="0.7" height="0.7" fill="#000"/><rect x="117.3" y="53.8" width="0.6" height="0.6" fill="#000"/><rect x="113.2" y="60.2" width="1.3" height="1.3" fill="#000"/><rect x="124.1" y="54.4" width="0.9" height="0.9" fill="#000"/><rect x="126.0" y="43.3" width="1.3" height="1.3" fill="#000"/><rect x="131.6" y="56.2" width="0.8" height="0.8" fill="#000"/><rect x="111.6" y="42.8" width="1.2" height="1.2" fill="#000"/><rect x="123.5" y="60.3" width="0.9" height="0.9" fill="#000"/><rect x="127.5" y="51.7" width="0.9" height="0.9" fill="#000"/><rect x="115.3" y="46.4" width="1.1" height="1.1" fill="#000"/><rect x="118.1" y="46.2" width="0.7" height="0.7" fill="#000"/><rect x="116.9" y="43.3" width="0.7" height="0.7" fill="#000"/><rect x="129.4" y="58.8" width="1.1" height="1.1" fill="#000"/><rect x="116.4" y="55.1" width="1.4" height="1.4" fill="#000"/><rect x="116.0" y="41.4" width="0.9" height="0.9" fill="#000"/><rect x="116.9" y="58.1" width="0.7" height="0.7" fill="#000"/><rect x="114.2" y="45.3" width="1.3" height="1.3" fill="#000"/><rect x="112.6" y="55.4" width="1.0" height="1.0" fill="#000"/><rect x="127.1" y="48.5" width="1.2" height="1.2" fill="#000"/><rect x="120.9" y="60.1" width="0.8" height="0.8" fill="#000"/><rect x="124.8" y="46.4" width="1.3" height="1.3" fill="#000"/><rect x="116.1" y="43.8" width="1.3" height="1.3" fill="#000"/><rect x="111.5" y="57.7" width="1.1" height="1.1" fill="#000"/><rect x="116.9" y="52.0" width="0.9" height="0.9" fill="#000"/><rect x="118.3" y="58.8" width="1.4" height="1.4" fill="#000"/><rect x="117.1" y="60.6" width="1.1" height="1.1" fill="#000"/><rect x="120.3" y="58.7" width="0.7" height="0.7" fill="#000"/><rect x="125.2" y="47.3" width="0.9" height="0.9" fill="#000"/><rect x="113.6" y="60.1" width="1.3" height="1.3" fill="#000"/><rect x="111.9" y="46.2" width="0.7" height="0.7" fill="#000"/><rect x="123.1" y="48.8" width="0.9" height="0.9" fill="#000"/><rect x="112.2" y="58.2" width="1.1" height="1.1" fill="#000"/><rect x="113.1" y="60.5" width="1.4" height="1.4" fill="#000"/><rect x="130.2" y="52.4" width="1.0" height="1.0" fill="#000"/><rect x="114.3" y="57.2" width="0.9" height="0.9" fill="#000"/><rect x="115.2" y="42.8" width="1.4" height="1.4" fill="#000"/><rect x="132.8" y="49.2" width="0.9" height="0.9" fill="#000"/><rect x="125.0" y="42.5" width="1.2" height="1.2" fill="#000"/><rect x="123.4" y="51.0" width="1.0" height="1.0" fill="#000"/><rect x="111.4" y="56.6" width="0.8" height="0.8" fill="#000"/><rect x="125.9" y="50.6" width="0.9" height="0.9" fill="#000"/><rect x="125.1" y="56.9" width="1.2" height="1.2" fill="#000"/><rect x="124.6" y="53.5" width="1.1" height="1.1" fill="#000"/><rect x="112.0" y="43.8" width="0.8" height="0.8" fill="#000"/><rect x="124.2" y="41.5" width="1.2" height="1.2" fill="#000"/><rect x="126.5" y="56.6" width="0.6" height="0.6" fill="#000"/><rect x="128.0" y="42.0" width="1.3" height="1.3" fill="#000"/><rect x="127.6" y="52.1" width="1.0" height="1.0" fill="#000"/><rect x="115.8" y="50.2" width="1.2" height="1.2" fill="#000"/><rect x="117.1" y="59.1" width="0.7" height="0.7" fill="#000"/><rect x="115.7" y="49.2" width="0.7" height="0.7" fill="#000"/><rect x="113.0" y="50.5" width="1.2" height="1.2" fill="#000"/><rect x="120.2" y="58.7" width="0.6" height="0.6" fill="#000"/><rect x="121.8" y="58.9" width="1.0" height="1.0" fill="#000"/><rect x="108.4" y="53.8" width="0.7" height="0.7" fill="#000"/><rect x="123.0" y="47.2" width="1.4" height="1.4" fill="#000"/><rect x="111.8" y="49.8" width="1.1" height="1.1" fill="#000"/><rect x="128.4" y="42.1" width="0.9" height="0.9" fill="#000"/><rect x="125.1" y="51.3" width="1.3" height="1.3" fill="#000"/><rect x="118.9" y="40.9" width="0.7" height="0.7" fill="#000"/><rect x="117.8" y="50.6" width="0.7" height="0.7" fill="#000"/><rect x="116.0" y="62.2" width="1.1" height="1.1" fill="#000"/><rect x="121.6" y="48.9" width="0.9" height="0.9" fill="#000"/><rect x="125.9" y="53.9" width="0.7" height="0.7" fill="#000"/><rect x="126.5" y="47.6" width="1.0" height="1.0" fill="#000"/><rect x="113.1" y="41.7" width="1.4" height="1.4" fill="#000"/><rect x="111.6" y="47.5" width="1.3" height="1.3" fill="#000"/><rect x="114.4" y="55.0" width="1.2" height="1.2" fill="#000"/><rect x="119.6" y="58.3" width="0.9" height="0.9" fill="#000"/><rect x="112.3" y="52.0" width="0.9" height="0.9" fill="#000"/><rect x="117.2" y="51.8" width="1.3" height="1.3" fill="#000"/><rect x="128.7" y="54.3" width="1.0" height="1.0" fill="#000"/><rect x="115.0" y="54.3" width="0.7" height="0.7" fill="#000"/><rect x="114.9" y="55.8" width="1.0" height="1.0" fill="#000"/><rect x="121.4" y="61.3" width="1.0" height="1.0" fill="#000"/><rect x="128.3" y="51.4" width="1.4" height="1.4" fill="#000"/><rect x="130.0" y="51.4" width="1.4" height="1.4" fill="#000"/><rect x="113.3" y="57.9" width="0.9" height="0.9" fill="#000"/><rect x="116.8" y="59.9" width="1.1" height="1.1" fill="#000"/><rect x="116.4" y="58.8" width="1.0" height="1.0" fill="#000"/><rect x="120.1" y="48.2" width="0.7" height="0.7" fill="#000"/><rect x="119.9" y="57.2" width="1.2" height="1.2" fill="#000"/><rect x="109.2" y="56.0" width="0.9" height="0.9" fill="#000"/><rect x="117.6" y="60.6" width="0.7" height="0.7" fill="#000"/><rect x="131.8" y="49.9" width="0.9" height="0.9" fill="#000"/><rect x="115.2" y="60.9" width="1.2" height="1.2" fill="#000"/><rect x="118.1" y="48.8" width="1.2" height="1.2" fill="#000"/><rect x="129.8" y="53.8" width="1.0" height="1.0" fill="#000"/><rect x="129.3" y="46.8" width="0.6" height="0.6" fill="#000"/><rect x="130.3" y="46.8" width="1.1" height="1.1" fill="#000"/><rect x="131.2" y="51.4" width="0.9" height="0.9" fill="#000"/><rect x="114.5" y="40.2" width="1.3" height="1.3" fill="#000"/><rect x="130.2" y="55.8" width="1.0" height="1.0" fill="#000"/><rect x="120.1" y="43.6" width="1.0" height="1.0" fill="#000"/><rect x="115.9" y="52.6" width="0.9" height="0.9" fill="#000"/><rect x="119.7" y="47.8" width="0.7" height="0.7" fill="#000"/><rect x="125.3" y="42.5" width="1.0" height="1.0" fill="#000"/><rect x="123.4" y="53.7" width="0.8" height="0.8" fill="#000"/><rect x="129.3" y="48.4" width="1.3" height="1.3" fill="#000"/><rect x="122.0" y="58.5" width="1.0" height="1.0" fill="#000"/><rect x="122.4" y="47.4" width="1.3" height="1.3" fill="#000"/><rect x="117.7" y="51.4" width="0.9" height="0.9" fill="#000"/><rect x="112.3" y="57.9" width="1.3" height="1.3" fill="#000"/><rect x="109.2" y="51.4" width="0.9" height="0.9" fill="#000"/><rect x="120.8" y="47.2" width="1.2" height="1.2" fill="#000"/><rect x="125.0" y="58.9" width="0.8" height="0.8" fill="#000"/><rect x="117.0" y="55.0" width="0.9" height="0.9" fill="#000"/><rect x="112.1" y="46.3" width="0.9" height="0.9" fill="#000"/><rect x="109.3" y="46.0" width="0.9" height="0.9" fill="#000"/><circle cx="146.8" cy="45.8" r="3.0" fill="none" stroke="#000" stroke-width="1.1"/><circle cx="149.3" cy="58.8" r="1.9" fill="none" stroke="#000" stroke-width="1.1"/><circle cx="153.3" cy="60.2" r="2.4" fill="none" stroke="#000" stroke-width="1.1"/><circle cx="153.9" cy="53.0" r="2.7" fill="none" stroke="#000" stroke-width="1.1"/><circle cx="146.7" cy="57.1" r="2.1" fill="none" stroke="#000" stroke-width="1.1"/><circle cx="147.4" cy="44.0" r="3.0" fill="none" stroke="#000" stroke-width="1.1"/><circle cx="160.8" cy="45.6" r="2.2" fill="none" stroke="#000" stroke-width="1.1"/><circle cx="155.2" cy="60.3" r="1.7" fill="none" stroke="#000" stroke-width="1.1"/><circle cx="150.2" cy="60.4" r="1.6" fill="none" stroke="#000" stroke-width="1.1"/><circle cx="151.1" cy="41.4" r="2.3" fill="none" stroke="#000" stroke-width="1.1"/><circle cx="151.7" cy="54.1" r="2.9" fill="none" stroke="#000" stroke-width="1.1"/><circle cx="155.0" cy="39.3" r="1.6" fill="none" stroke="#000" stroke-width="1.1"/><circle cx="155.2" cy="44.5" r="1.8" fill="none" stroke="#000" stroke-width="1.1"/><circle cx="144.9" cy="48.0" r="1.7" fill="none" stroke="#000" stroke-width="1.1"/><circle cx="154.9" cy="40.9" r="2.8" fill="none" stroke="#000" stroke-width="1.1"/><circle cx="162.8" cy="45.4" r="2.0" fill="none" stroke="#000" stroke-width="1.1"/><circle cx="163.7" cy="46.9" r="1.9" fill="none" stroke="#000" stroke-width="1.1"/><circle cx="160.4" cy="42.0" r="1.9" fill="none" stroke="#000" stroke-width="1.1"/><rect x="154.0" y="51.2" width="1.0" height="1.0" fill="#000"/><rect x="153.9" y="55.7" width="0.8" height="0.8" fill="#000"/><rect x="159.7" y="55.7" width="0.8" height="0.8" fill="#000"/><rect x="152.7" y="55.4" width="1.0" height="1.0" fill="#000"/><rect x="157.0" y="47.2" width="1.2" height="1.2" fill="#000"/><rect x="159.9" y="42.9" width="1.0" height="1.0" fill="#000"/><rect x="153.1" y="41.8" width="1.1" height="1.1" fill="#000"/><rect x="163.8" y="45.0" width="0.8" height="0.8" fill="#000"/><rect x="165.8" y="53.9" width="0.9" height="0.9" fill="#000"/><rect x="155.3" y="45.1" width="0.9" height="0.9" fill="#000"/><rect x="146.6" y="57.2" width="1.3" height="1.3" fill="#000"/><rect x="144.8" y="49.7" width="0.8" height="0.8" fill="#000"/><rect x="155.4" y="61.6" width="0.7" height="0.7" fill="#000"/><rect x="163.4" y="46.6" width="0.7" height="0.7" fill="#000"/><rect x="156.7" y="48.2" width="1.0" height="1.0" fill="#000"/><rect x="163.4" y="58.1" width="0.8" height="0.8" fill="#000"/><rect x="155.7" y="48.4" width="1.1" height="1.1" fill="#000"/><rect x="155.4" y="50.6" width="1.0" height="1.0" fill="#000"/><rect x="164.3" y="49.0" width="1.2" height="1.2" fill="#000"/><rect x="155.9" y="42.1" width="0.7" height="0.7" fill="#000"/><rect x="149.4" y="49.3" width="1.0" height="1.0" fill="#000"/><rect x="148.8" y="56.3" width="0.7" height="0.7" fill="#000"/><rect x="151.9" y="43.2" width="0.9" height="0.9" fill="#000"/><rect x="161.4" y="53.7" width="1.0" height="1.0" fill="#000"/><rect x="163.1" y="48.5" width="0.7" height="0.7" fill="#000"/><rect x="151.9" y="55.9" width="1.1" height="1.1" fill="#000"/><rect x="165.9" y="45.6" width="1.3" height="1.3" fill="#000"/><rect x="164.6" y="45.0" width="1.3" height="1.3" fill="#000"/><rect x="162.4" y="51.0" width="1.0" height="1.0" fill="#000"/><rect x="150.2" y="41.8" width="1.0" height="1.0" fill="#000"/><rect x="156.7" y="48.9" width="1.0" height="1.0" fill="#000"/><rect x="155.6" y="49.6" width="0.7" height="0.7" fill="#000"/><rect x="162.6" y="41.4" width="0.6" height="0.6" fill="#000"/><rect x="165.4" y="52.1" width="1.1" height="1.1" fill="#000"/><rect x="144.7" y="48.9" width="1.1" height="1.1" fill="#000"/><rect x="154.1" y="49.9" width="0.6" height="0.6" fill="#000"/><rect x="157.5" y="38.6" width="1.2" height="1.2" fill="#000"/><rect x="148.4" y="53.4" width="0.8" height="0.8" fill="#000"/><rect x="165.1" y="51.0" width="0.8" height="0.8" fill="#000"/><rect x="146.4" y="45.8" width="0.8" height="0.8" fill="#000"/><rect x="150.3" y="43.3" width="0.8" height="0.8" fill="#000"/><rect x="157.4" y="47.1" width="0.7" height="0.7" fill="#000"/><rect x="153.8" y="57.7" width="1.1" height="1.1" fill="#000"/><rect x="151.3" y="54.4" width="1.1" height="1.1" fill="#000"/><rect x="153.4" y="58.1" width="0.8" height="0.8" fill="#000"/><rect x="157.4" y="47.0" width="0.8" height="0.8" fill="#000"/><rect x="151.9" y="55.8" width="1.1" height="1.1" fill="#000"/><rect x="148.8" y="40.7" width="1.0" height="1.0" fill="#000"/><rect x="163.7" y="54.8" width="0.8" height="0.8" fill="#000"/><rect x="155.5" y="56.9" width="1.3" height="1.3" fill="#000"/><rect x="149.2" y="54.7" width="1.2" height="1.2" fill="#000"/><rect x="161.3" y="49.6" width="0.7" height="0.7" fill="#000"/><rect x="156.8" y="40.0" width="0.8" height="0.8" fill="#000"/><rect x="155.8" y="43.5" width="0.8" height="0.8" fill="#000"/><rect x="144.9" y="44.5" width="0.9" height="0.9" fill="#000"/><rect x="154.4" y="49.2" width="0.9" height="0.9" fill="#000"/><rect x="152.2" y="51.6" width="1.2" height="1.2" fill="#000"/><rect x="157.1" y="53.6" width="1.2" height="1.2" fill="#000"/><rect x="166.1" y="47.2" width="0.8" height="0.8" fill="#000"/><rect x="157.7" y="48.4" width="1.1" height="1.1" fill="#000"/><rect x="158.6" y="48.5" width="0.7" height="0.7" fill="#000"/><rect x="148.7" y="40.0" width="1.1" height="1.1" fill="#000"/><rect x="161.7" y="47.7" width="0.9" height="0.9" fill="#000"/><rect x="158.3" y="53.8" width="1.3" height="1.3" fill="#000"/><rect x="158.3" y="51.9" width="0.8" height="0.8" fill="#000"/><rect x="160.1" y="51.8" width="0.7" height="0.7" fill="#000"/><rect x="160.3" y="55.7" width="1.0" height="1.0" fill="#000"/><rect x="143.9" y="45.8" width="1.0" height="1.0" fill="#000"/><rect x="156.7" y="49.1" width="0.8" height="0.8" fill="#000"/><rect x="159.7" y="52.8" width="1.1" height="1.1" fill="#000"/><rect x="161.7" y="46.4" width="0.7" height="0.7" fill="#000"/><rect x="149.5" y="57.5" width="0.8" height="0.8" fill="#000"/><rect x="157.4" y="38.6" width="0.9" height="0.9" fill="#000"/><rect x="144.6" y="43.5" width="0.9" height="0.9" fill="#000"/><rect x="158.6" y="60.8" width="1.3" height="1.3" fill="#000"/><rect x="164.9" y="51.6" width="0.9" height="0.9" fill="#000"/><rect x="158.1" y="51.3" width="0.7" height="0.7" fill="#000"/><rect x="153.6" y="45.3" width="0.6" height="0.6" fill="#000"/><rect x="156.1" y="60.3" width="0.9" height="0.9" fill="#000"/><rect x="149.3" y="43.8" width="0.7" height="0.7" fill="#000"/><rect x="160.3" y="50.6" width="0.6" height="0.6" fill="#000"/><rect x="153.4" y="59.0" width="0.9" height="0.9" fill="#000"/><rect x="144.3" y="51.5" width="0.8" height="0.8" fill="#000"/><rect x="146.5" y="58.7" width="1.0" height="1.0" fill="#000"/><rect x="146.2" y="54.1" width="0.9" height="0.9" fill="#000"/><rect x="147.9" y="59.9" width="0.8" height="0.8" fill="#000"/><rect x="164.9" y="45.7" width="1.2" height="1.2" fill="#000"/><rect x="158.5" y="56.8" width="1.3" height="1.3" fill="#000"/><rect x="152.9" y="54.0" width="1.1" height="1.1" fill="#000"/><rect x="154.9" y="58.6" width="0.7" height="0.7" fill="#000"/><circle cx="188" cy="51" r="13.5" fill="url(#dk)"/><rect x="192.1" y="49.6" width="0.9" height="0.9" fill="#fff"/><rect x="186.0" y="46.2" width="1.2" height="1.2" fill="#fff"/><rect x="176.8" y="51.2" width="1.2" height="1.2" fill="#fff"/><rect x="187.9" y="51.0" width="1.2" height="1.2" fill="#fff"/><rect x="187.1" y="58.6" width="1.3" height="1.3" fill="#fff"/><rect x="186.3" y="51.4" width="1.2" height="1.2" fill="#fff"/><rect x="179.6" y="52.0" width="1.6" height="1.6" fill="#fff"/><rect x="186.8" y="57.1" width="0.9" height="0.9" fill="#fff"/><rect x="189.2" y="47.4" width="1.5" height="1.5" fill="#fff"/><rect x="189.2" y="47.2" width="1.5" height="1.5" fill="#fff"/><rect x="181.9" y="50.9" width="1.2" height="1.2" fill="#fff"/><rect x="194.4" y="48.7" width="1.2" height="1.2" fill="#fff"/><rect x="185.4" y="61.1" width="1.2" height="1.2" fill="#fff"/><rect x="186.2" y="53.7" width="1.0" height="1.0" fill="#fff"/><rect x="193.1" y="42.3" width="1.6" height="1.6" fill="#fff"/><rect x="195.7" y="46.6" width="1.4" height="1.4" fill="#fff"/><rect x="185.6" y="41.2" width="1.4" height="1.4" fill="#fff"/><rect x="192.6" y="60.1" width="1.0" height="1.0" fill="#fff"/><rect x="188.4" y="62.2" width="0.8" height="0.8" fill="#fff"/><rect x="182.9" y="50.6" width="1.4" height="1.4" fill="#fff"/><rect x="179.4" y="43.9" width="1.5" height="1.5" fill="#fff"/><rect x="187.2" y="49.9" width="1.3" height="1.3" fill="#fff"/><rect x="197.1" y="58.5" width="1.5" height="1.5" fill="#fff"/><rect x="186.8" y="53.9" width="1.4" height="1.4" fill="#fff"/><rect x="188.6" y="39.2" width="1.3" height="1.3" fill="#fff"/><rect x="194.6" y="57.6" width="0.8" height="0.8" fill="#fff"/><rect x="194.6" y="43.8" width="1.4" height="1.4" fill="#fff"/><rect x="193.4" y="45.5" width="1.6" height="1.6" fill="#fff"/><rect x="183.6" y="45.8" width="1.1" height="1.1" fill="#fff"/><rect x="187.6" y="51.5" width="0.9" height="0.9" fill="#fff"/><rect x="189.0" y="47.5" width="1.3" height="1.3" fill="#fff"/><rect x="189.4" y="42.1" width="1.2" height="1.2" fill="#fff"/><rect x="186.3" y="54.9" width="0.9" height="0.9" fill="#fff"/><rect x="182.7" y="43.9" width="1.6" height="1.6" fill="#fff"/><rect x="182.5" y="60.9" width="1.5" height="1.5" fill="#fff"/><rect x="185.1" y="62.2" width="1.3" height="1.3" fill="#fff"/><rect x="197.5" y="48.7" width="1.1" height="1.1" fill="#fff"/><rect x="186.7" y="58.0" width="1.2" height="1.2" fill="#fff"/><rect x="198.4" y="53.4" width="1.2" height="1.2" fill="#fff"/><rect x="178.7" y="52.6" width="1.0" height="1.0" fill="#fff"/></g></svg>
<div class="a" style="left:1128px;top:654px;width:235px;height:20px;border:1px solid #b4b4b4;background:#fff"></div>
<div class="t" style="left:1132.5px;top:660.00px;font-size:10px;font-family:'Liberation Sans',sans-serif;color:#111;transform:scaleX(0.9329);transform-origin:0 0;">Media,</div>
<svg style="left:1348px;top:662px" width="8" height="5"><path d="M0 0 L7.5 0 L3.75 4.5Z" fill="#111"/></svg>
<div class="a" style="left:1128px;top:676px;width:235px;height:28px;border:1px solid #111;background:#fff"></div>
<div class="a" style="left:1129px;top:677px;width:25px;height:26px;background:#b7c3cd;border-right:1px solid #111"></div>
<div class="t" style="left:1130.2px;top:686.00px;font-size:10px;font-family:'Liberation Sans',sans-serif;color:#111;transform:scaleX(0.9409);transform-origin:0 0;">Spacing</div>
<div class="t" style="left:1334px;top:686.00px;font-size:10px;font-family:'Liberation Sans',sans-serif;color:#111;transform:scaleX(0.8838);transform-origin:0 0;">25.0</div>
<svg style="left:1353px;top:679px" width="9" height="22"><path d="M1 6 L4.5 2 L8 6" stroke="#8a8aa8" fill="none"/><rect x="0" y="10" width="9" height="1" fill="#aaa"/><path d="M1 15 L4.5 19 L8 15Z" fill="#8a9ad8"/></svg>
<svg style="left:1145px;top:709px" width="14" height="15"><path d="M1 1 L10 1 L10 14 L1 14Z" fill="#fafafa" stroke="#aaa"/><line x1="4" y1="11" x2="12" y2="3" stroke="#e08a30" stroke-width="2.5"/></svg><svg style="left:1191px;top:709px" width="13" height="15"><path d="M1 1 L8 1 L12 5 L12 14 L1 14Z" fill="#fbfbfb" stroke="#aaa"/></svg><svg style="left:1237px;top:709px" width="15" height="15"><rect x="3" y="3" width="11" height="11" rx="2" fill="#777"/><rect x="1" y="1" width="11" height="11" rx="2" fill="#555" opacity="0.8"/></svg><svg style="left:1285px;top:709px" width="13" height="15"><rect x="1" y="3" width="11" height="12" rx="3" fill="#666"/><ellipse cx="6.5" cy="3" rx="5.5" ry="2" fill="#888"/></svg><svg style="left:1332px;top:709px" width="15" height="15"><path d="M2 7 Q2 2 8 2 L10 2 L10 0 L14 4 L10 8 L10 6 L8 6 Q5 6 5 8Z" fill="#4a8ad0"/><path d="M13 8 Q13 13 7 13 L5 13 L5 15 L1 11 L5 7 L5 9 L7 9 Q10 9 10 7Z" fill="#4a8ad0"/></svg>
<div class="a" style="left:0px;top:728px;width:1366px;height:40px;background:linear-gradient(90deg,#3c0e0b 0,#4a1c18 60px,#5a2c26 100px,#3a0c09 200px,#4e2420 300px,#3c0e0b 420px,#47201b 560px,#3b0d0a 700px,#4a201b 780px,#3c0f0c 860px,#4a211d 960px,#3c0f0c 1050px,#431815 1200px,#3b0e0b 1366px)"></div>
<div class="a" style="left:0px;top:728px;width:1366px;height:1px;background:rgba(255,255,255,0.25)"></div>
<div class="a" style="left:0px;top:729px;width:1366px;height:1px;background:rgba(0,0,0,0.4)"></div>
<div class="a" style="left:122px;top:729px;width:58px;height:38px;border:1px solid rgba(255,255,255,0.35);border-radius:3px;background:linear-gradient(rgba(255,255,255,0.28),rgba(255,255,255,0.10));"></div>
<div class="a" style="left:308px;top:729px;width:58px;height:38px;border:1px solid rgba(255,255,255,0.35);border-radius:3px;background:linear-gradient(rgba(255,255,255,0.28),rgba(255,255,255,0.10));"></div>
<div class="a" style="left:556px;top:729px;width:58px;height:38px;border:1px solid rgba(255,255,255,0.35);border-radius:3px;background:linear-gradient(rgba(255,255,255,0.28),rgba(255,255,255,0.10));border-left:2px solid #50d040;"></div>
<div class="a" style="left:618px;top:729px;width:58px;height:38px;border:1px solid rgba(255,255,255,0.35);border-radius:3px;background:linear-gradient(rgba(255,255,255,0.28),rgba(255,255,255,0.10));background:linear-gradient(rgba(255,255,255,0.62),rgba(255,255,255,0.45));"></div>
<svg style="left:8px;top:729px" width="40" height="38"><defs><radialGradient id="orb" cx="0.5" cy="0.3" r="0.7"><stop offset="0" stop-color="#8ad0f0"/><stop offset="0.5" stop-color="#2a6ab0"/><stop offset="1" stop-color="#0a3a70"/></radialGradient></defs><circle cx="20" cy="19" r="18" fill="url(#orb)" stroke="#1a3050" stroke-width="1"/><path d="M11 12 Q15 10 19 12 L18 18 Q14 16 10 18Z" fill="#f06a2a"/><path d="M21 12 Q25 14 29 12 L28 18 Q24 20 20 18Z" fill="#8ac83a"/><path d="M10 20 Q14 18 18 20 L17 26 Q13 24 9 26Z" fill="#3a9ae0"/><path d="M20 20 Q24 22 28 20 L27 26 Q23 28 19 26Z" fill="#f6c830"/></svg><svg style="left:73px;top:731px" width="34" height="34"><circle cx="17" cy="17" r="15.5" fill="#1a2a38" stroke="#0a1a28"/><circle cx="17" cy="17" r="11" fill="#f4f4f4"/><text x="17" y="22" font-family="Liberation Sans" font-style="italic" font-weight="bold" font-size="14" fill="#1a2a38" text-anchor="middle">hp</text></svg><svg style="left:134px;top:731px" width="34" height="34"><defs><radialGradient id="ffb" cx="0.6" cy="0.35" r="0.6"><stop offset="0" stop-color="#6ac0f0"/><stop offset="0.6" stop-color="#2a6ad0"/><stop offset="1" stop-color="#1a3a90"/></radialGradient><linearGradient id="ffo" x1="0" y1="0" x2="0.3" y2="1"><stop offset="0" stop-color="#f8c030"/><stop offset="0.5" stop-color="#f07010"/><stop offset="1" stop-color="#d83010"/></linearGradient></defs><circle cx="18" cy="16" r="12.5" fill="url(#ffb)"/><path d="M5 9 Q3 16 5 22 Q9 31 19 31 Q29 30 31.5 20 Q28 25 21 24.5 Q14 24 13 19 Q12 15 16 13 Q13 17 17 19 Q20 19 21 16 Q17 15 17 12 Q14 9 10 11 Q10 6 14 3 Q7 5 5 9Z" fill="url(#ffo)"/></svg><svg style="left:196px;top:733px" width="32" height="32"><rect x="3" y="6" width="6" height="18" fill="#ddd" stroke="#888"/><rect x="8" y="3" width="22" height="18" fill="#eee" stroke="#888"/><rect x="10" y="5" width="18" height="14" fill="#0a3a1a"/><path d="M10 14 L14 10 L16 16 L19 8 L22 14 L28 11" stroke="#30e040" stroke-width="1.2" fill="none"/><ellipse cx="19" cy="27" rx="7" ry="2.5" fill="#ddd" stroke="#999"/></svg><svg style="left:258px;top:732px" width="34" height="34"><path d="M2 6 L12 6 L14 8 L32 8 L32 30 L2 30Z" fill="#e8d088" stroke="#b8a060"/><rect x="2" y="12" width="30" height="18" fill="#f4e4a8"/><rect x="6" y="5" width="5" height="3" fill="#4ac040"/><rect x="13" y="6" width="5" height="3" fill="#e04030"/><rect x="20" y="7" width="5" height="3" fill="#3a8ae0"/><path d="M8 22 L26 22 L26 32 L22 32 L22 26 L12 26 L12 32 L8 32Z" fill="#7ab0e0" stroke="#3a70b0"/></svg><svg style="left:320px;top:732px" width="34" height="34"><rect x="8" y="4" width="22" height="26" fill="#a8c8e8" stroke="#6a90c0"/><rect x="5" y="6" width="22" height="26" fill="#8ab8e4" stroke="#4a80c0"/><circle cx="15.5" cy="18" r="8" fill="#f07820" stroke="#fff" stroke-width="1.5"/><path d="M13 13 L20 18 L13 23Z" fill="#fff"/></svg><svg style="left:385px;top:732px" width="32" height="32"><circle cx="16" cy="16" r="11" fill="#7a6a5a"/><circle cx="16" cy="16" r="13" fill="none" stroke="#d02020" stroke-width="3.5"/><line x1="7" y1="7" x2="25" y2="25" stroke="#d02020" stroke-width="3.5"/></svg><svg style="left:446px;top:732px" width="34" height="34"><circle cx="15" cy="15" r="13" fill="#3a3a3a" stroke="#222"/><path d="M6 20 Q10 8 26 6 L14 22Z" fill="#e04050"/><circle cx="10" cy="21" r="6" fill="#e04050"/><path d="M20 17 L30 17 L30 25 Q25 31 25 31 Q20 28 20 25Z" fill="#f6d030" stroke="#fff"/><path d="M25 17 V31 M20 24 H30" stroke="#3a7ad0" stroke-width="2.5"/></svg><svg style="left:506px;top:732px" width="34" height="34"><circle cx="17" cy="17" r="15" fill="#1a8ae0" stroke="#0a5aa0"/><path d="M8 23 L12 11 L15 11 L14 15 Q17 10 20 11 Q22 12 21 15 Q24 10 27 12 L24 23 L21 23 L23 15 L20 15 L18 23 L15 23 L17 15 L14 15 L11 23Z" fill="#fff"/></svg><svg style="left:568px;top:731px" width="36" height="36"><defs><linearGradient id="stg" x1="0" y1="0" x2="0" y2="1"><stop offset="0" stop-color="#0a1a40"/><stop offset="0.55" stop-color="#143a78"/><stop offset="1" stop-color="#2a80c8"/></linearGradient></defs><circle cx="17.2" cy="16.9" r="14.8" fill="url(#stg)"/><circle cx="22" cy="12.6" r="4.6" fill="none" stroke="#e8e8f0" stroke-width="2.2"/><circle cx="11.5" cy="22.6" r="3.4" fill="none" stroke="#e8e8f0" stroke-width="2"/><path d="M2.6 18 L11 21 L18.5 15.5 L20 17.5 L13.5 25.5 Q8 26.5 3.5 22Z" fill="#e8e8f0"/></svg><svg style="left:628px;top:733px" width="40" height="32"><defs><linearGradient id="gmg" x1="0" y1="0" x2="0" y2="1"><stop offset="0" stop-color="#8a8470"/><stop offset="1" stop-color="#4e4a3e"/></linearGradient></defs><path d="M9 14 Q12 6 19 5 Q24 6 27 9 Q29 3 31 1 Q34 6 33 14 Q32 22 24 25 Q15 26 11 20Z" fill="url(#gmg)" stroke="#3a3628" stroke-width="0.8"/><ellipse cx="8.5" cy="15" rx="4.6" ry="4" fill="#111"/><ellipse cx="7.5" cy="13.5" rx="1.6" ry="1.1" fill="#888"/><circle cx="14.5" cy="12" r="2.6" fill="#f4f4f4" stroke="#222" stroke-width="0.6"/><circle cx="19.5" cy="12" r="2.6" fill="#f4f4f4" stroke="#222" stroke-width="0.6"/><circle cx="15" cy="12.5" r="1.1" fill="#000"/><circle cx="20" cy="12.5" r="1.1" fill="#000"/><path d="M22 20 L34 28" stroke="#d8c8b0" stroke-width="2"/><path d="M21 19.5 L25 22" stroke="#e08030" stroke-width="2"/></svg><svg style="left:1116px;top:732px" width="36" height="34"><circle cx="14" cy="19" r="13" fill="#1a4a8a" stroke="#0a2a5a"/><text x="14" y="27" font-family="Liberation Sans" font-weight="bold" font-size="20" fill="#fff" text-anchor="middle">?</text><circle cx="25" cy="10" r="9" fill="#e8b818" stroke="#a07a08"/><rect x="23.5" y="4" width="3" height="8" fill="#fff"/><rect x="23.5" y="13.5" width="3" height="3" fill="#fff"/></svg><svg style="left:1162px;top:744px" width="12" height="8"><path d="M1 7 L6 1 L11 7Z" fill="#eee"/></svg><svg style="left:1184px;top:739px" width="20" height="20"><rect x="1" y="1" width="1.5" height="17" fill="#fff"/><path d="M2.5 1 L12 1 L12 9 L2.5 9Z" fill="#f0f0f0"/><circle cx="13" cy="13" r="5" fill="#e02020" stroke="#fff"/><path d="M11 11 L15 15 M15 11 L11 15" stroke="#fff" stroke-width="1.3"/></svg><svg style="left:1208px;top:740px" width="18" height="16"><g fill="#eee"><rect x="1" y="12" width="2" height="3"/><rect x="5" y="10" width="2" height="5"/><rect x="9" y="7" width="2" height="8"/><rect x="13" y="3" width="2" height="12"/></g></svg><svg style="left:1233px;top:739px" width="16" height="18"><rect x="1" y="2" width="9" height="14" fill="none" stroke="#eee" stroke-width="1.5"/><path d="M6 6 H14 V11 H6Z M8 2 V6 M12 2 V6 M10 11 V16" stroke="#eee" stroke-width="1.5" fill="#eee"/></svg><svg style="left:1258px;top:740px" width="16" height="16"><path d="M1 5 L4 5 L9 1 L9 15 L4 11 L1 11Z" fill="#eee"/><path d="M11 5 Q13 8 11 11" stroke="#eee" stroke-width="1" fill="none"/></svg>
<div class="t" style="left:1294.6px;top:735.00px;font-size:11.7px;font-family:'Liberation Sans',sans-serif;color:#fff;transform:scaleX(0.9686);transform-origin:0 0;">4:24 PM</div>
<div class="t" style="left:1290px;top:751.00px;font-size:11.7px;font-family:'Liberation Sans',sans-serif;color:#fff;transform:scaleX(0.9876);transform-origin:0 0;">2/10/2015</div>
<div class="a" style="left:1352px;top:729px;width:14px;height:39px;border-left:1px solid rgba(255,255,255,0.35);background:linear-gradient(90deg,rgba(255,255,255,0.08),rgba(255,255,255,0.15))"></div></body></html>
